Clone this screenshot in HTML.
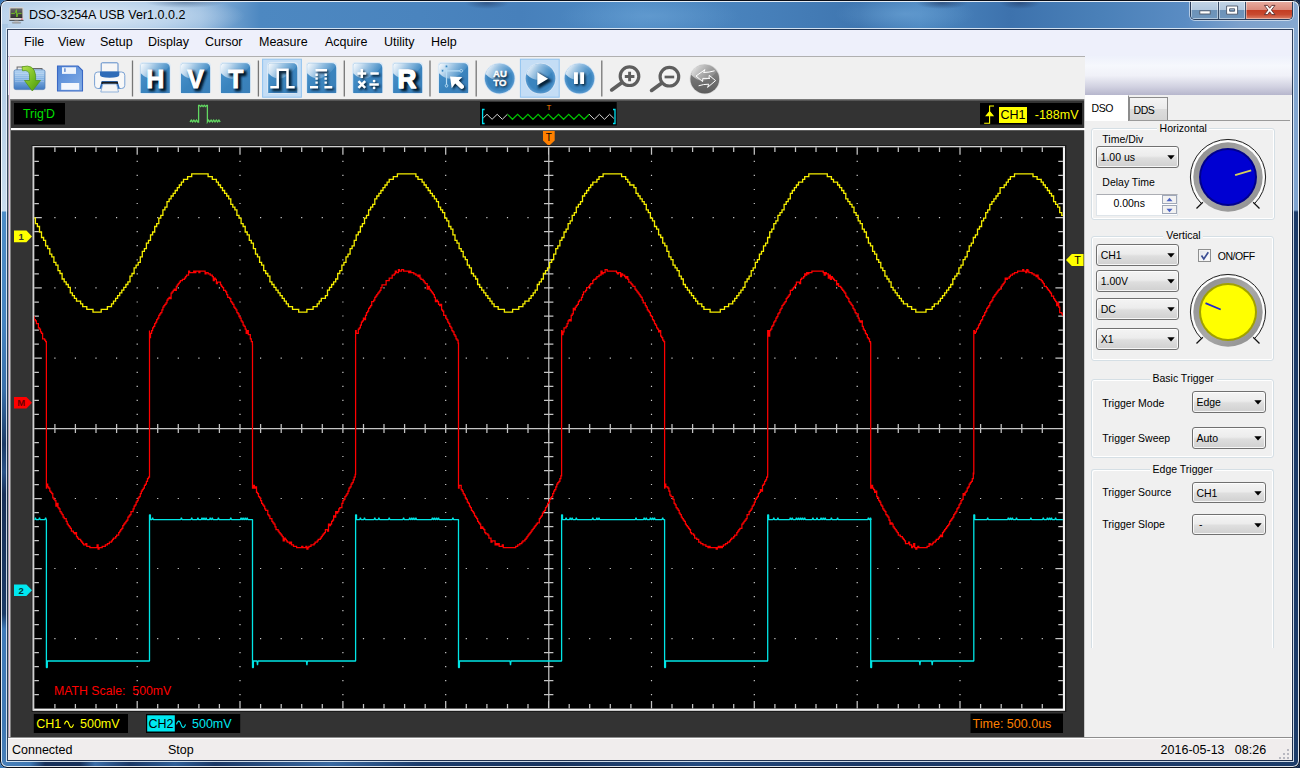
<!DOCTYPE html>
<html>
<head>
<meta charset="utf-8">
<title>DSO-3254A USB Ver1.0.0.2</title>
<style>
*{box-sizing:border-box;margin:0;padding:0}
html,body{width:1300px;height:768px;overflow:hidden;background:linear-gradient(90deg,#3d7ab8 0%,#2a5a90 50%,#14284a 100%);font-family:"Liberation Sans",sans-serif;font-size:11px;color:#000}
.abs{position:absolute}
#win{position:absolute;left:0;top:0;width:1300px;height:768px;overflow:hidden;border-radius:7px;
 background:
 radial-gradient(ellipse 40px 6px at 185px 2px,rgba(40,70,110,.45),rgba(40,70,110,0) 100%),
 radial-gradient(ellipse 150px 26px at 95px 16px,rgba(225,236,247,.95) 0%,rgba(200,220,240,.75) 55%,rgba(170,200,230,0) 100%),
 radial-gradient(ellipse 22px 6px at 487px 3px,rgba(30,50,90,.5),rgba(30,50,90,0) 100%),
 radial-gradient(ellipse 26px 6px at 942px 3px,rgba(30,50,90,.55),rgba(30,50,90,0) 100%),
 radial-gradient(ellipse 20px 6px at 1020px 3px,rgba(30,50,90,.5),rgba(30,50,90,0) 100%),
 radial-gradient(ellipse 90px 20px at 650px 16px,rgba(110,165,215,.55),rgba(110,165,215,0) 100%),
 radial-gradient(ellipse 70px 18px at 905px 14px,rgba(110,165,215,.6),rgba(110,165,215,0) 100%),
 linear-gradient(90deg,#a9c7e3 0px,#8fb6dc 200px,#4d88c1 260px,#4a84be 420px,#4780bb 520px,#4f8bc4 640px,#4780ba 760px,#3f76b0 860px,#4c87c0 920px,#3d72ad 1010px,#4a80b8 1100px,#5a8cc3 1185px,#7da1cc 1240px,#86a8d0 1300px)}
#lb,#rb,#bb{position:absolute}
#lb{left:0;top:24px;width:8px;height:744px;background:linear-gradient(180deg,#a9c7e3 0px,#b4cde6 60px,#c9dcee 186px,#c9dcee 187px,#4e8dc6 188px,#4683c0 300px,#3a70aa 365px,#1b3a66 420px,#2a5288 448px,#182f58 470px,#1b3a66 590px,#3f7ab8 605px,#3f78b4 700px,#4a80b8 744px)}
#rb{left:1292px;top:24px;width:8px;height:744px;background:linear-gradient(180deg,#86a8d0 0px,#7ea3cf 186px,#1c3c6a 188px,#1c3c6a 744px)}
#bb{left:0;top:760px;width:1300px;height:8px;background:linear-gradient(90deg,#4a80b8 0px,#3f78b4 30px,#16305a 45px,#16305a 80px,#3c6ea8 95px,#1a3866 130px,#2f5f98 175px,#1a3866 215px,#3a6aa2 330px,#1b3c6c 420px,#18345f 560px,#244b80 700px,#1a3866 860px,#1c3c6a 1300px)}
#frame{position:absolute;left:0;top:0;width:1300px;height:768px;border:1px solid #0a0e18;border-radius:7px;box-shadow:inset 0 0 0 1px rgba(255,255,255,.85);pointer-events:none}
#cframe{position:absolute;left:6px;top:28px;width:1288px;height:734px;border:1px solid rgba(235,243,252,.85);box-shadow:inset 0 0 0 1px rgba(30,45,70,.85)}
#title{position:absolute;left:29px;top:7px;font-size:12.5px;line-height:16px;color:#000;white-space:nowrap;letter-spacing:0px}
#client{position:absolute;left:8px;top:30px;width:1284px;height:730px;background:#f0f0f0}
#menubar{position:absolute;left:0;top:0;width:1284px;height:26px;background:#eef0fb}
#menubar span{position:absolute;top:4px;font-size:12.5px;line-height:16px;white-space:nowrap}
#rightgrad{position:absolute;left:1077px;top:26px;width:207px;height:39px;background:linear-gradient(180deg,#eef1fb 0%,#f6f8fd 25%,#f0f1f8 50%,#d0d0e0 80%,#b6b6cc 100%)}
#toolbar{position:absolute;left:0;top:26px;width:1077px;height:44px;background:#f0f0f0}
#scope{position:absolute;left:3px;top:69px;width:1073px;height:638px;background:linear-gradient(180deg,#8a8a8a 0px,#333 2.5px,#333 100%)}
#status{position:absolute;left:0;top:707px;width:1284px;height:23px;background:#f0eded;border-top:1px solid #8e8e8e;box-shadow:inset 0 1px 0 #fff}
#status span{position:absolute;top:4px;font-size:12.5px;line-height:16px;white-space:nowrap}
#panel{position:absolute;left:1077px;top:65px;width:207px;height:642px;background:#f0f0f0;border-right:1px solid #fff}
.pt{font-size:10.5px;line-height:13px;white-space:nowrap;color:#000}
</style>
</head>
<body>
<div id="win">
 <div id="lb"></div><div id="rb"></div><div id="bb"></div><div id="cframe"></div>
 <svg class="abs" style="left:9px;top:7px" width="15" height="17" viewBox="0 0 15 17">
 <defs><linearGradient id="mg" x1="0" y1="0" x2="0" y2="1"><stop offset="0" stop-color="#6a6a6a"/><stop offset="1" stop-color="#2e2e2e"/></linearGradient></defs>
 <rect x="0.3" y="0.3" width="14.2" height="12.6" rx="0.8" fill="#d9d6d0"/>
 <rect x="1.4" y="1.4" width="12" height="9.6" fill="url(#mg)"/>
 <path d="M2.2,6.4H5.6L6.6,5.2L7.4,2.6L7.9,10L8.6,6.6L9.4,6.4H12.6" fill="none" stroke="#74c424" stroke-width="0.95"/>
 <rect x="12.2" y="11.6" width="1.4" height="1" fill="#e02050"/>
 <rect x="0.3" y="12.9" width="14.2" height="0.9" fill="#3a3a3a"/>
 <path d="M5.5,13.8H9.5L10,15.3H5Z" fill="#c8c8c8"/>
 <rect x="3.3" y="15.2" width="8.4" height="1.1" rx="0.5" fill="#b0b0b0" stroke="#666" stroke-width="0.3"/>
</svg>
<div class="abs" id="capbtns" style="left:1190px;top:1px;width:103px;height:19px;border:1px solid #2a3d5a;border-top:none;border-radius:0 0 5px 5px;overflow:hidden;box-shadow:0 0 0 1px rgba(255,255,255,.55)">
 <div class="abs" style="left:0;top:0;width:28px;height:18px;background:linear-gradient(180deg,#c3d5e6 0%,#b2c8de 48%,#6d92b8 50%,#6f96bd 100%);border-right:1px solid #3a4d68;box-shadow:inset 0 0 0 1px rgba(255,255,255,.45)"></div>
 <div class="abs" style="left:28px;top:0;width:27px;height:18px;background:linear-gradient(180deg,#c3d5e6 0%,#b2c8de 48%,#6d92b8 50%,#6f96bd 100%);border-right:1px solid #3a4d68;box-shadow:inset 0 0 0 1px rgba(255,255,255,.45)"></div>
 <div class="abs" style="left:55px;top:0;width:47px;height:18px;background:linear-gradient(180deg,#e8aea2 0%,#db8b7c 48%,#c43c22 50%,#c84a30 75%,#dc8068 100%);box-shadow:inset 0 0 0 1px rgba(255,255,255,.4)"></div>
 <svg class="abs" style="left:0;top:0" width="102" height="18" viewBox="1191 1 102 18">
  <rect x="1199.8" y="10.8" width="10.4" height="3.2" fill="#fff" stroke="#4a5568" stroke-width="0.9"/>
  <path d="M1226.6,6H1237.6V14.2H1226.6Z M1229.6,8.8H1234.6V11.2H1229.6Z" fill="#fff" fill-rule="evenodd" stroke="#4a5568" stroke-width="0.9"/>
  <path d="M1264.4,5.4H1267.6L1269.7,8.2L1271.8,5.4H1275L1271.4,10L1275,14.6H1271.8L1269.7,11.8L1267.600,14.6H1264.4L1268,10Z" fill="#fff" stroke="#5a3030" stroke-width="0.9"/>
 </svg>
</div>

 <div id="title">DSO-3254A USB Ver1.0.0.2</div>
 <div id="client">
  <div id="menubar">
   <span style="left:16px">File</span><span style="left:50px">View</span><span style="left:92px">Setup</span><span style="left:140px">Display</span><span style="left:197px">Cursor</span><span style="left:251px">Measure</span><span style="left:317px">Acquire</span><span style="left:376px">Utility</span><span style="left:423px">Help</span>
  </div>
  <div id="rightgrad"></div>
  <div id="toolbar"><svg class="abs" style="left:0;top:0" width="1077" height="45" viewBox="8 56 1077 45" font-family="'Liberation Sans',sans-serif">
<defs>
 <linearGradient id="bbg" x1="0" y1="0" x2="1" y2="1"><stop offset="0" stop-color="#4f97cf"/><stop offset=".5" stop-color="#3a84be"/><stop offset="1" stop-color="#3a7fb8"/></linearGradient>
 <linearGradient id="bhl" x1="0" y1="0" x2="1" y2=".35"><stop offset="0" stop-color="#fff" stop-opacity=".98"/><stop offset=".3" stop-color="#e4eff9" stop-opacity=".8"/><stop offset=".7" stop-color="#a9cdea" stop-opacity=".5"/><stop offset="1" stop-color="#6aa8d8" stop-opacity=".25"/></linearGradient>
 <radialGradient id="cbg" cx=".5" cy=".5" r=".5"><stop offset="0" stop-color="#3a84be"/><stop offset=".8" stop-color="#3a84be"/><stop offset="1" stop-color="#5a9ad0"/></radialGradient>
 <linearGradient id="gbg" x1="0" y1="0" x2="0" y2="1"><stop offset="0" stop-color="#8c8c8c"/><stop offset="1" stop-color="#5c5c5c"/></linearGradient>
 <linearGradient id="ghl" x1="0" y1="0" x2="1" y2=".35"><stop offset="0" stop-color="#fff" stop-opacity=".9"/><stop offset="1" stop-color="#bbb" stop-opacity=".25"/></linearGradient>
 <filter id="sh" x="-30%" y="-30%" width="160%" height="160%"><feGaussianBlur stdDeviation="1.3"/></filter>
 <filter id="shd" x="-30%" y="-30%" width="170%" height="170%"><feGaussianBlur in="SourceAlpha" stdDeviation="1.2" result="b"/><feFlood flood-color="#04182c" flood-opacity=".95"/><feComposite in2="b" operator="in"/></filter>
 <filter id="halo" x="-20%" y="-20%" width="140%" height="140%"><feGaussianBlur stdDeviation="0.7"/></filter>
 <g id="sq">
  <rect x="-0.500" y="-0.700" width="31.200" height="32" rx="4" fill="#dbe9f6" filter="url(#halo)"/>
  <path d="M0.700,3.200Q0.700,0.500 3.400,0.500H25Q29.800,0.500 29.800,5.300V30.300H0.700Z" fill="url(#bbg)"/>
  <path d="M0.700,3.200Q0.700,0.500 3.400,0.500H25Q28.700,0.500 29.600,3.300Q14,24 0.700,10.500Z" fill="url(#bhl)"/>
 </g>
 <g id="ci">
  <circle cx="0" cy="0" r="15.800" fill="#d6e6f5" filter="url(#halo)"/>
  <circle cx="0" cy="0" r="14.900" fill="url(#cbg)"/>
  <path d="M-14.200,-4.500A14.900,14.900 0 0 1 12.600,-7.900Q-1,9 -14.200,-4.500Z" fill="url(#bhl)"/>
 </g>
 <linearGradient id="fold" x1="0" y1="0" x2="0" y2="1"><stop offset="0" stop-color="#b7d6f3"/><stop offset=".5" stop-color="#7fb0e2"/><stop offset="1" stop-color="#3f78c0"/></linearGradient>
 <linearGradient id="garr" x1="0" y1="0" x2="1" y2="1"><stop offset="0" stop-color="#b4e04a"/><stop offset=".6" stop-color="#6fb81e"/><stop offset="1" stop-color="#4c9010"/></linearGradient>
 <linearGradient id="flp" x1="0" y1="0" x2="1" y2="1"><stop offset="0" stop-color="#4f85d6"/><stop offset="1" stop-color="#84aee6"/></linearGradient>
</defs>
<rect x="8" y="55.600" width="1077" height="1.200" fill="#a0a0a0"/>
<!-- open folder -->
<g>
 <path d="M16.600,66.500H25.500L27,68H42.500V72H16.600Z" fill="#6a6a6a"/>
 <path d="M17.600,67.500H25L26.500,69H41.500V72H17.600Z" fill="#e8e8e8"/>
 <rect x="14" y="69.800" width="31" height="19.800" rx="1.800" fill="url(#fold)" stroke="#4a78b0" stroke-width=".7"/>
 <path d="M15,73.500H44M15,75.500H44M15,77.500H44M15,79.500H44M15,81.500H44" stroke="#fff" stroke-opacity=".35" stroke-width=".6"/>
 <path d="M22,66.800Q34,63.500 35.600,75V80.500H40.500L32.300,91L24.500,80.500H29.500V75Q29,69.500 22.500,70.800Z" fill="url(#garr)" stroke="#4f8f14" stroke-width=".7"/>
</g>
<!-- floppy -->
<g>
 <path d="M57.500,66H78L82.500,70.500V91H57.500Z" fill="url(#flp)" stroke="#3a68c4" stroke-width="1.100"/>
 <rect x="62" y="67.300" width="14" height="6.600" fill="#eef4fc"/>
 <rect x="64.200" y="68.300" width="1.400" height="3.600" fill="#5a86d0"/>
 <rect x="61.200" y="83" width="18" height="6.800" fill="#f4f7fd"/>
</g>
<!-- printer -->
<g>
 <rect x="101.200" y="62.800" width="16.800" height="11" rx="1" fill="#f6f6f6" stroke="#5a8ac8" stroke-width="1"/>
 <rect x="94.600" y="72" width="30.200" height="16.500" rx="3.200" fill="#f8f8f8" stroke="#7aa2d4" stroke-width="1"/>
 <path d="M100,71.500H119.300V75Q119.300,77.800 109.600,77.800Q100,77.800 100,75Z" fill="#2f6cb8"/>
 <path d="M100.500,88.500L102.500,82H116.800L118.800,88.500" fill="none" stroke="#2f6cb8" stroke-width="2"/>
 <rect x="101.500" y="81.800" width="16.400" height="2.200" fill="#1a1a1a"/>
 <path d="M102.800,84H116.600L118.500,92H100.800Z" fill="#f4f4f4" stroke="#7aa2d4" stroke-width=".8"/>
</g>
<!-- separators -->
<path d="M132.500,60.400V96.400M258.400,60.400V96.400M344.300,60.400V96.400M430,60.400V96.400M476.200,60.400V96.400M601.800,60.400V96.400" stroke="#767676" stroke-width="1.300"/>
<!-- highlights -->
<rect x="262.600" y="59.200" width="38.800" height="38" fill="#c4ddf5" stroke="#92c4f0" stroke-width="1"/>
<rect x="520.400" y="59.200" width="38.800" height="38" fill="#c4ddf5" stroke="#92c4f0" stroke-width="1"/>
<!-- H V T -->
<use href="#sq" x="140" y="62.800"/><use href="#sq" x="180.300" y="62.800"/><use href="#sq" x="220.300" y="62.800"/>
<g font-weight="bold" font-size="25" text-anchor="middle">
 <g fill="#04182c" stroke="#04182c" stroke-width="2.6" stroke-linejoin="round"><text x="157.600" y="89.900" filter="url(#sh)">H</text><text x="197.800" y="89.900" filter="url(#sh)">V</text><text x="237.900" y="89.900" filter="url(#sh)">T</text></g>
 <g fill="#fff" stroke="#fff" stroke-width=".9"><text x="155.400" y="87.500">H</text><text x="195.600" y="87.500">V</text><text x="235.700" y="87.500">T</text></g>
</g>
<!-- pulse -->
<use href="#sq" x="267.500" y="62.800"/>
<path d="M272.300,89.300H279.700V71.800H289.500V89.300H296.700" fill="none" stroke="#04182c" stroke-width="4" filter="url(#sh)" opacity=".9"/>
<path d="M270.300,87.300H277.700V69.800H287.500V87.300H294.700" fill="none" stroke="#fff" stroke-width="2.500"/>
<!-- dotted pulse -->
<use href="#sq" x="306.400" y="62.800"/>
<use href="#gdp" x="1.500" y="1.700" filter="url(#shd)"/>
<g id="gdp"><path d="M315.500,70.300H327M310,87.300H318M324.400,87.300H332.300" stroke="#fff" stroke-width="2.400" fill="none"/>
<path d="M316.600,73.600v2.300M316.600,77.500v2.300M316.600,81.400v2.300M325.700,73.600v2.300M325.700,77.500v2.300M325.700,81.400v2.300" stroke="#fff" stroke-width="2.400" fill="none"/></g>
<!-- math -->
<use href="#sq" x="352.500" y="62.800"/>
<use href="#gma" x="1.500" y="1.700" filter="url(#shd)"/>
<g id="gma"><path d="M357.400,73.500h8.800M361.800,69.100v8.800M370.400,73.500h8.400M358.400,81.100l6.800,6.800M365.200,81.100l-6.800,6.800M369.400,84.500h9.400" stroke="#fff" stroke-width="2.500" fill="none"/>
<circle cx="374.100" cy="81.100" r="1.400" fill="#fff"/><circle cx="374.100" cy="87.900" r="1.400" fill="#fff"/></g>
<!-- R -->
<use href="#sq" x="392.400" y="62.800"/>
<text x="409.800" y="90.400" font-weight="bold" font-size="26" text-anchor="middle" fill="#04182c" stroke="#04182c" stroke-width="2.6" stroke-linejoin="round" filter="url(#sh)">R</text><text x="407" y="87.600" font-weight="bold" font-size="26" text-anchor="middle" fill="#fff" stroke="#fff" stroke-width="1.500" stroke-linejoin="round">R</text>
<!-- cursor -->
<use href="#sq" x="438.300" y="62.800"/>
<path d="M446.500,66.800V85.500M443,70.800H460.800" stroke="#b8dcf4" stroke-width="1.200" fill="none"/>
<g fill="#3a84be" stroke="#b8dcf4" stroke-width=".9"><circle cx="446.500" cy="66.400" r="1.300"/><circle cx="446.500" cy="85.800" r="1.300"/><circle cx="442.600" cy="70.800" r="1.300"/><circle cx="461.200" cy="70.800" r="1.300"/></g>
<use href="#gca" x="1.400" y="1.600" filter="url(#shd)"/>
<g id="gca"><path d="M450,76.500L462.300,77L458.800,80.400L463.800,85.400Q464.800,87.200 463.200,88.600Q461.600,89.700 460.200,88.300L455.200,83.600L451.700,88.200Z" fill="#fff"/></g>
<!-- AUTO -->
<use href="#ci" x="499.700" y="78.600"/>
<use href="#gau" x="1.100" y="1.300" filter="url(#shd)"/>
<g id="gau" font-weight="bold" font-size="9.600" text-anchor="middle" fill="#fff" stroke="#fff" stroke-width=".35"><text x="499.900" y="77.300">AU</text><text x="499.900" y="86">TO</text></g>
<!-- play -->
<use href="#ci" x="540.500" y="78.600"/>
<path d="M539.300,74.200V87.300L550.100,80.800Z" fill="#04182c" stroke="#04182c" stroke-width="2" filter="url(#sh)" opacity=".9"/>
<path d="M537.300,72.200V85.300L548.100,78.800Z" fill="#fff"/>
<!-- pause -->
<use href="#ci" x="579.500" y="78.600"/>
<use href="#gpa" x="1.300" y="1.500" filter="url(#shd)"/>
<g id="gpa"><path d="M574,72.200h3.900v11.800h-3.900zM580.200,72.200h3.900v11.800h-3.900z" fill="#fff"/></g>
<!-- zoom in/out -->
<g fill="none" stroke="#5e5e5e">
 <circle cx="629.500" cy="76.200" r="9.300" stroke-width="3.200" fill="#f4f4f4"/>
 <path d="M621.300,83.100L611.700,89.900" stroke-width="3.700" stroke-linecap="round"/>
 <path d="M624.800,76.500h9.600M629.600,71.700v9.600" stroke-width="2.900"/>
 <circle cx="669.400" cy="76.700" r="9.300" stroke-width="3.200" fill="#f4f4f4"/>
 <path d="M661.200,83.600L651.600,90.400" stroke-width="3.700" stroke-linecap="round"/>
 <path d="M664.600,77h9.600" stroke-width="2.700"/>
</g>
<!-- swap -->
<circle cx="704.800" cy="79.100" r="15.200" fill="#d8d8d8" filter="url(#halo)"/>
<circle cx="704.800" cy="79.100" r="14.400" fill="url(#gbg)"/>
<path d="M691.100,74.700A14.400,14.400 0 0 1 717,71.500Q703.800,88 691.100,74.700Z" fill="url(#ghl)"/>
<path d="M714.600,70.800Q709,72.500 703.600,72.500L705,69.600L696,76L702.600,81.600L702.800,78.400H710" fill="none" stroke="#fff" stroke-width="1"/>
<path d="M698.600,85.800Q703,84.200 708.800,84.200L707.600,87.400L715.600,80.600L709.200,75.300L709,78.400" fill="none" stroke="#fff" stroke-width="1"/>
</svg>
</div>
  <div class="abs" style="left:0;top:65px;width:1px;height:642px;background:#a2a2a2"></div><div class="abs" style="left:1px;top:26px;width:1px;height:681px;background:#e8cde8"></div><div class="abs" style="left:2px;top:69px;width:2px;height:638px;background:linear-gradient(90deg,#9a9a9a,#3a3a3a)"></div><div class="abs" style="left:1076px;top:69px;width:1px;height:638px;background:#c8c8c8"></div>
  <div id="scope"><svg width="1074" height="637" viewBox="11 100 1074 637" style="position:absolute;left:0;top:1px" font-family="'Liberation Sans',sans-serif">
<defs><linearGradient id="tsh" x1="0" y1="0" x2="0" y2="1"><stop offset="0" stop-color="#9a9a9a"/><stop offset="1" stop-color="#333"/></linearGradient></defs>
<rect x="14" y="103" width="51" height="21.5" fill="#000"/>
<text x="39" y="118.3" font-size="12.300" fill="#00e000" text-anchor="middle">Trig'D</text>
<polyline fill="none" stroke="#62d862" stroke-width="1.3" points="190,122 191.3,120.2 192.6,122 193.9,120.2 195.2,122 196.5,120.2 197.8,122 198.6,122 198.6,105.3 199.5,105.3 200.7,106.6 201.9,105.3 203.1,106.6 204.3,105.3 205.5,106.6 206.7,105.3 207.4,105.3 207.4,122 208.5,120.2 209.8,122 211.1,120.2 212.4,122 213.7,120.2 215,122 216.3,120.2 217.6,122 218.9,120.2 220.2,122"/>
<rect x="480" y="102" width="136.7" height="23.5" fill="#000"/>
<polyline fill="none" stroke="#d8d8d8" stroke-width="1" points="483.3,117.9 487,114.3 492.1,119.3 497.2,114.3 502.3,119.3 507.4,114.3 507.5,114.4"/>
<polyline fill="none" stroke="#00c000" stroke-width="1.2" points="507.5,114.4 512.5,119.3 517.6,114.3 522.8,119.3 527.9,114.3 533,119.3 538.1,114.3 543.2,119.3 548.3,114.3 553.4,119.3 558.5,114.3 563.6,119.3 568.7,114.3 573.9,119.3 579,114.3 584.1,119.3 589.2,114.3 589.2,114.3"/>
<polyline fill="none" stroke="#d8d8d8" stroke-width="1" points="589.2,114.3 594.3,119.3 599.4,114.3 604.5,119.3 609.6,114.3 613.8,118.4"/>
<path d="M484.6,109.5H482.6V123.5H484.6M613,109.5H615V123.5H613" fill="none" stroke="#00e0f0" stroke-width="1.3"/>
<text x="548.8" y="109.700" font-size="7.800" fill="#ff8000" text-anchor="middle">T</text>
<rect x="980" y="103" width="102" height="21.5" fill="#000"/>
<path d="M984.2,123.2H989.6V106H994M986.2,115.8L989.6,111.6L993,115.8Z" fill="none" stroke="#ffff00" stroke-width="1.1"/>
<path d="M986.2,115.8L989.6,111.6L993,115.8Z" fill="#ffff00"/>
<rect x="999" y="107" width="28" height="16" fill="#ffff00"/>
<text x="1013" y="119" font-size="12.5" fill="#000" text-anchor="middle">CH1</text>
<text x="1078.5" y="119" font-size="12.5" fill="#ffff00" text-anchor="end">-188mV</text>
<rect x="11" y="128" width="1074" height="2.2" fill="#fff"/>
<path d="M543,131H554.7V140.5L548.85,146L543,140.5Z" fill="#ff8000"/>
<text x="548.85" y="140.6" font-size="10" fill="#000" text-anchor="middle">T</text>
<rect x="31.7" y="145" width="1034.6" height="767" fill="#1a1a1a" style="height:567px"/>
<rect x="32.7" y="146" width="1032.3" height="564.8" fill="#f2f2f2"/>
<path d="M32.7,146H1065V148.1H34.3V710.8H32.7Z" fill="#cfcfcf"/>
<rect x="34.3" y="147.3" width="1028.6" height="561.3" fill="#000"/>
<path d="M54.3,217.6h1.2M74.8,217.6h1.2M95.4,217.6h1.2M116,217.6h1.2M136.6,217.6h1.2M157.1,217.6h1.2M177.7,217.6h1.2M198.3,217.6h1.2M218.8,217.6h1.2M239.4,217.6h1.2M260,217.6h1.2M280.6,217.6h1.2M301.1,217.6h1.2M321.7,217.6h1.2M342.3,217.6h1.2M362.9,217.6h1.2M383.4,217.6h1.2M404,217.6h1.2M424.6,217.6h1.2M445.1,217.6h1.2M465.7,217.6h1.2M486.3,217.6h1.2M506.9,217.6h1.2M527.4,217.6h1.2M548,217.6h1.2M568.6,217.6h1.2M589.1,217.6h1.2M609.7,217.6h1.2M630.3,217.6h1.2M650.9,217.6h1.2M671.4,217.6h1.2M692,217.6h1.2M712.6,217.6h1.2M733.1,217.6h1.2M753.7,217.6h1.2M774.3,217.6h1.2M794.9,217.6h1.2M815.4,217.6h1.2M836,217.6h1.2M856.6,217.6h1.2M877.2,217.6h1.2M897.7,217.6h1.2M918.3,217.6h1.2M938.9,217.6h1.2M959.4,217.6h1.2M980,217.6h1.2M1000.6,217.6h1.2M1021.2,217.6h1.2M1041.7,217.6h1.2M54.3,287.9h1.2M74.8,287.9h1.2M95.4,287.9h1.2M116,287.9h1.2M136.6,287.9h1.2M157.1,287.9h1.2M177.7,287.9h1.2M198.3,287.9h1.2M218.8,287.9h1.2M239.4,287.9h1.2M260,287.9h1.2M280.6,287.9h1.2M301.1,287.9h1.2M321.7,287.9h1.2M342.3,287.9h1.2M362.9,287.9h1.2M383.4,287.9h1.2M404,287.9h1.2M424.6,287.9h1.2M445.1,287.9h1.2M465.7,287.9h1.2M486.3,287.9h1.2M506.9,287.9h1.2M527.4,287.9h1.2M548,287.9h1.2M568.6,287.9h1.2M589.1,287.9h1.2M609.7,287.9h1.2M630.3,287.9h1.2M650.9,287.9h1.2M671.4,287.9h1.2M692,287.9h1.2M712.6,287.9h1.2M733.1,287.9h1.2M753.7,287.9h1.2M774.3,287.9h1.2M794.9,287.9h1.2M815.4,287.9h1.2M836,287.9h1.2M856.6,287.9h1.2M877.2,287.9h1.2M897.7,287.9h1.2M918.3,287.9h1.2M938.9,287.9h1.2M959.4,287.9h1.2M980,287.9h1.2M1000.6,287.9h1.2M1021.2,287.9h1.2M1041.7,287.9h1.2M54.3,358.2h1.2M74.8,358.2h1.2M95.4,358.2h1.2M116,358.2h1.2M136.6,358.2h1.2M157.1,358.2h1.2M177.7,358.2h1.2M198.3,358.2h1.2M218.8,358.2h1.2M239.4,358.2h1.2M260,358.2h1.2M280.6,358.2h1.2M301.1,358.2h1.2M321.7,358.2h1.2M342.3,358.2h1.2M362.9,358.2h1.2M383.4,358.2h1.2M404,358.2h1.2M424.6,358.2h1.2M445.1,358.2h1.2M465.7,358.2h1.2M486.3,358.2h1.2M506.9,358.2h1.2M527.4,358.2h1.2M548,358.2h1.2M568.6,358.2h1.2M589.1,358.2h1.2M609.7,358.2h1.2M630.3,358.2h1.2M650.9,358.2h1.2M671.4,358.2h1.2M692,358.2h1.2M712.6,358.2h1.2M733.1,358.2h1.2M753.7,358.2h1.2M774.3,358.2h1.2M794.9,358.2h1.2M815.4,358.2h1.2M836,358.2h1.2M856.6,358.2h1.2M877.2,358.2h1.2M897.7,358.2h1.2M918.3,358.2h1.2M938.9,358.2h1.2M959.4,358.2h1.2M980,358.2h1.2M1000.6,358.2h1.2M1021.2,358.2h1.2M1041.7,358.2h1.2M54.3,498.5h1.2M74.8,498.5h1.2M95.4,498.5h1.2M116,498.5h1.2M136.6,498.5h1.2M157.1,498.5h1.2M177.7,498.5h1.2M198.3,498.5h1.2M218.8,498.5h1.2M239.4,498.5h1.2M260,498.5h1.2M280.6,498.5h1.2M301.1,498.5h1.2M321.7,498.5h1.2M342.3,498.5h1.2M362.9,498.5h1.2M383.4,498.5h1.2M404,498.5h1.2M424.6,498.5h1.2M445.1,498.5h1.2M465.7,498.5h1.2M486.3,498.5h1.2M506.9,498.5h1.2M527.4,498.5h1.2M548,498.5h1.2M568.6,498.5h1.2M589.1,498.5h1.2M609.7,498.5h1.2M630.3,498.5h1.2M650.9,498.5h1.2M671.4,498.5h1.2M692,498.5h1.2M712.6,498.5h1.2M733.1,498.5h1.2M753.7,498.5h1.2M774.3,498.5h1.2M794.9,498.5h1.2M815.4,498.5h1.2M836,498.5h1.2M856.6,498.5h1.2M877.2,498.5h1.2M897.7,498.5h1.2M918.3,498.5h1.2M938.9,498.5h1.2M959.4,498.5h1.2M980,498.5h1.2M1000.6,498.5h1.2M1021.2,498.5h1.2M1041.7,498.5h1.2M54.3,568.5h1.2M74.8,568.5h1.2M95.4,568.5h1.2M116,568.5h1.2M136.6,568.5h1.2M157.1,568.5h1.2M177.7,568.5h1.2M198.3,568.5h1.2M218.8,568.5h1.2M239.4,568.5h1.2M260,568.5h1.2M280.6,568.5h1.2M301.1,568.5h1.2M321.7,568.5h1.2M342.3,568.5h1.2M362.9,568.5h1.2M383.4,568.5h1.2M404,568.5h1.2M424.6,568.5h1.2M445.1,568.5h1.2M465.7,568.5h1.2M486.3,568.5h1.2M506.9,568.5h1.2M527.4,568.5h1.2M548,568.5h1.2M568.6,568.5h1.2M589.1,568.5h1.2M609.7,568.5h1.2M630.3,568.5h1.2M650.9,568.5h1.2M671.4,568.5h1.2M692,568.5h1.2M712.6,568.5h1.2M733.1,568.5h1.2M753.7,568.5h1.2M774.3,568.5h1.2M794.9,568.5h1.2M815.4,568.5h1.2M836,568.5h1.2M856.6,568.5h1.2M877.2,568.5h1.2M897.7,568.5h1.2M918.3,568.5h1.2M938.9,568.5h1.2M959.4,568.5h1.2M980,568.5h1.2M1000.6,568.5h1.2M1021.2,568.5h1.2M1041.7,568.5h1.2M54.3,638.6h1.2M74.8,638.6h1.2M95.4,638.6h1.2M116,638.6h1.2M136.6,638.6h1.2M157.1,638.6h1.2M177.7,638.6h1.2M198.3,638.6h1.2M218.8,638.6h1.2M239.4,638.6h1.2M260,638.6h1.2M280.6,638.6h1.2M301.1,638.6h1.2M321.7,638.6h1.2M342.3,638.6h1.2M362.9,638.6h1.2M383.4,638.6h1.2M404,638.6h1.2M424.6,638.6h1.2M445.1,638.6h1.2M465.7,638.6h1.2M486.3,638.6h1.2M506.9,638.6h1.2M527.4,638.6h1.2M548,638.6h1.2M568.6,638.6h1.2M589.1,638.6h1.2M609.7,638.6h1.2M630.3,638.6h1.2M650.9,638.6h1.2M671.4,638.6h1.2M692,638.6h1.2M712.6,638.6h1.2M733.1,638.6h1.2M753.7,638.6h1.2M774.3,638.6h1.2M794.9,638.6h1.2M815.4,638.6h1.2M836,638.6h1.2M856.6,638.6h1.2M877.2,638.6h1.2M897.7,638.6h1.2M918.3,638.6h1.2M938.9,638.6h1.2M959.4,638.6h1.2M980,638.6h1.2M1000.6,638.6h1.2M1021.2,638.6h1.2M1041.7,638.6h1.2M136.6,161.4h1.2M136.6,175.4h1.2M136.6,189.5h1.2M136.6,203.5h1.2M136.6,231.7h1.2M136.6,245.7h1.2M136.6,259.8h1.2M136.6,273.8h1.2M136.6,302h1.2M136.6,316h1.2M136.6,330.1h1.2M136.6,344.1h1.2M136.6,372.3h1.2M136.6,386.3h1.2M136.6,400.4h1.2M136.6,414.4h1.2M136.6,442.5h1.2M136.6,456.5h1.2M136.6,470.5h1.2M136.6,484.5h1.2M136.6,512.5h1.2M136.6,526.5h1.2M136.6,540.5h1.2M136.6,554.5h1.2M136.6,582.6h1.2M136.6,596.6h1.2M136.6,610.6h1.2M136.6,624.6h1.2M136.6,652.6h1.2M136.6,666.6h1.2M136.6,680.6h1.2M136.6,694.6h1.2M239.4,161.4h1.2M239.4,175.4h1.2M239.4,189.5h1.2M239.4,203.5h1.2M239.4,231.7h1.2M239.4,245.7h1.2M239.4,259.8h1.2M239.4,273.8h1.2M239.4,302h1.2M239.4,316h1.2M239.4,330.1h1.2M239.4,344.1h1.2M239.4,372.3h1.2M239.4,386.3h1.2M239.4,400.4h1.2M239.4,414.4h1.2M239.4,442.5h1.2M239.4,456.5h1.2M239.4,470.5h1.2M239.4,484.5h1.2M239.4,512.5h1.2M239.4,526.5h1.2M239.4,540.5h1.2M239.4,554.5h1.2M239.4,582.6h1.2M239.4,596.6h1.2M239.4,610.6h1.2M239.4,624.6h1.2M239.4,652.6h1.2M239.4,666.6h1.2M239.4,680.6h1.2M239.4,694.6h1.2M342.3,161.4h1.2M342.3,175.4h1.2M342.3,189.5h1.2M342.3,203.5h1.2M342.3,231.7h1.2M342.3,245.7h1.2M342.3,259.8h1.2M342.3,273.8h1.2M342.3,302h1.2M342.3,316h1.2M342.3,330.1h1.2M342.3,344.1h1.2M342.3,372.3h1.2M342.3,386.3h1.2M342.3,400.4h1.2M342.3,414.4h1.2M342.3,442.5h1.2M342.3,456.5h1.2M342.3,470.5h1.2M342.3,484.5h1.2M342.3,512.5h1.2M342.3,526.5h1.2M342.3,540.5h1.2M342.3,554.5h1.2M342.3,582.6h1.2M342.3,596.6h1.2M342.3,610.6h1.2M342.3,624.6h1.2M342.3,652.6h1.2M342.3,666.6h1.2M342.3,680.6h1.2M342.3,694.6h1.2M445.1,161.4h1.2M445.1,175.4h1.2M445.1,189.5h1.2M445.1,203.5h1.2M445.1,231.7h1.2M445.1,245.7h1.2M445.1,259.8h1.2M445.1,273.8h1.2M445.1,302h1.2M445.1,316h1.2M445.1,330.1h1.2M445.1,344.1h1.2M445.1,372.3h1.2M445.1,386.3h1.2M445.1,400.4h1.2M445.1,414.4h1.2M445.1,442.5h1.2M445.1,456.5h1.2M445.1,470.5h1.2M445.1,484.5h1.2M445.1,512.5h1.2M445.1,526.5h1.2M445.1,540.5h1.2M445.1,554.5h1.2M445.1,582.6h1.2M445.1,596.6h1.2M445.1,610.6h1.2M445.1,624.6h1.2M445.1,652.6h1.2M445.1,666.6h1.2M445.1,680.6h1.2M445.1,694.6h1.2M650.9,161.4h1.2M650.9,175.4h1.2M650.9,189.5h1.2M650.9,203.5h1.2M650.9,231.7h1.2M650.9,245.7h1.2M650.9,259.8h1.2M650.9,273.8h1.2M650.9,302h1.2M650.9,316h1.2M650.9,330.1h1.2M650.9,344.1h1.2M650.9,372.3h1.2M650.9,386.3h1.2M650.9,400.4h1.2M650.9,414.4h1.2M650.9,442.5h1.2M650.9,456.5h1.2M650.9,470.5h1.2M650.9,484.5h1.2M650.9,512.5h1.2M650.9,526.5h1.2M650.9,540.5h1.2M650.9,554.5h1.2M650.9,582.6h1.2M650.9,596.6h1.2M650.9,610.6h1.2M650.9,624.6h1.2M650.9,652.6h1.2M650.9,666.6h1.2M650.9,680.6h1.2M650.9,694.6h1.2M753.7,161.4h1.2M753.7,175.4h1.2M753.7,189.5h1.2M753.7,203.5h1.2M753.7,231.7h1.2M753.7,245.7h1.2M753.7,259.8h1.2M753.7,273.8h1.2M753.7,302h1.2M753.7,316h1.2M753.7,330.1h1.2M753.7,344.1h1.2M753.7,372.3h1.2M753.7,386.3h1.2M753.7,400.4h1.2M753.7,414.4h1.2M753.7,442.5h1.2M753.7,456.5h1.2M753.7,470.5h1.2M753.7,484.5h1.2M753.7,512.5h1.2M753.7,526.5h1.2M753.7,540.5h1.2M753.7,554.5h1.2M753.7,582.6h1.2M753.7,596.6h1.2M753.7,610.6h1.2M753.7,624.6h1.2M753.7,652.6h1.2M753.7,666.6h1.2M753.7,680.6h1.2M753.7,694.6h1.2M856.6,161.4h1.2M856.6,175.4h1.2M856.6,189.5h1.2M856.6,203.5h1.2M856.6,231.7h1.2M856.6,245.7h1.2M856.6,259.8h1.2M856.6,273.8h1.2M856.6,302h1.2M856.6,316h1.2M856.6,330.1h1.2M856.6,344.1h1.2M856.6,372.3h1.2M856.6,386.3h1.2M856.6,400.4h1.2M856.6,414.4h1.2M856.6,442.5h1.2M856.6,456.5h1.2M856.6,470.5h1.2M856.6,484.5h1.2M856.6,512.5h1.2M856.6,526.5h1.2M856.6,540.5h1.2M856.6,554.5h1.2M856.6,582.6h1.2M856.6,596.6h1.2M856.6,610.6h1.2M856.6,624.6h1.2M856.6,652.6h1.2M856.6,666.6h1.2M856.6,680.6h1.2M856.6,694.6h1.2M959.4,161.4h1.2M959.4,175.4h1.2M959.4,189.5h1.2M959.4,203.5h1.2M959.4,231.7h1.2M959.4,245.7h1.2M959.4,259.8h1.2M959.4,273.8h1.2M959.4,302h1.2M959.4,316h1.2M959.4,330.1h1.2M959.4,344.1h1.2M959.4,372.3h1.2M959.4,386.3h1.2M959.4,400.4h1.2M959.4,414.4h1.2M959.4,442.5h1.2M959.4,456.5h1.2M959.4,470.5h1.2M959.4,484.5h1.2M959.4,512.5h1.2M959.4,526.5h1.2M959.4,540.5h1.2M959.4,554.5h1.2M959.4,582.6h1.2M959.4,596.6h1.2M959.4,610.6h1.2M959.4,624.6h1.2M959.4,652.6h1.2M959.4,666.6h1.2M959.4,680.6h1.2M959.4,694.6h1.2" stroke="#c8c8c8" stroke-width="1.2" fill="none"/>
<path d="M54.9,147.3v4.6M54.9,708.6v-4.6M75.4,147.3v4.6M75.4,708.6v-4.6M96,147.3v4.6M96,708.6v-4.6M116.6,147.3v4.6M116.6,708.6v-4.6M137.2,147.3v7.5M137.2,708.6v-7.5M157.7,147.3v4.6M157.7,708.6v-4.6M178.3,147.3v4.6M178.3,708.6v-4.6M198.9,147.3v4.6M198.9,708.6v-4.6M219.4,147.3v4.6M219.4,708.6v-4.6M240,147.3v7.5M240,708.6v-7.5M260.6,147.3v4.6M260.6,708.6v-4.6M281.2,147.3v4.6M281.2,708.6v-4.6M301.7,147.3v4.6M301.7,708.6v-4.6M322.3,147.3v4.6M322.3,708.6v-4.6M342.9,147.3v7.5M342.9,708.6v-7.5M363.5,147.3v4.6M363.5,708.6v-4.6M384,147.3v4.6M384,708.6v-4.6M404.6,147.3v4.6M404.6,708.6v-4.6M425.2,147.3v4.6M425.2,708.6v-4.6M445.7,147.3v7.5M445.7,708.6v-7.5M466.3,147.3v4.6M466.3,708.6v-4.6M486.9,147.3v4.6M486.9,708.6v-4.6M507.5,147.3v4.6M507.5,708.6v-4.6M528,147.3v4.6M528,708.6v-4.6M548.6,147.3v7.5M548.6,708.6v-7.5M569.2,147.3v4.6M569.2,708.6v-4.6M589.7,147.3v4.6M589.7,708.6v-4.6M610.3,147.3v4.6M610.3,708.6v-4.6M630.9,147.3v4.6M630.9,708.6v-4.6M651.5,147.3v7.5M651.5,708.6v-7.5M672,147.3v4.6M672,708.6v-4.6M692.6,147.3v4.6M692.6,708.6v-4.6M713.2,147.3v4.6M713.2,708.6v-4.6M733.7,147.3v4.6M733.7,708.6v-4.6M754.3,147.3v7.5M754.3,708.6v-7.5M774.9,147.3v4.6M774.9,708.6v-4.6M795.5,147.3v4.6M795.5,708.6v-4.6M816,147.3v4.6M816,708.6v-4.6M836.6,147.3v4.6M836.6,708.6v-4.6M857.2,147.3v7.5M857.2,708.6v-7.5M877.8,147.3v4.6M877.8,708.6v-4.6M898.3,147.3v4.6M898.3,708.6v-4.6M918.9,147.3v4.6M918.9,708.6v-4.6M939.5,147.3v4.6M939.5,708.6v-4.6M960,147.3v7.5M960,708.6v-7.5M980.6,147.3v4.6M980.6,708.6v-4.6M1001.2,147.3v4.6M1001.2,708.6v-4.6M1021.8,147.3v4.6M1021.8,708.6v-4.6M1042.3,147.3v4.6M1042.3,708.6v-4.6M34.3,161.4h4.6M1062.9,161.4h-4.6M34.3,175.4h4.6M1062.9,175.4h-4.6M34.3,189.5h4.6M1062.9,189.5h-4.6M34.3,203.5h4.6M1062.9,203.5h-4.6M34.3,217.6h7.5M1062.9,217.6h-7.5M34.3,231.7h4.6M1062.9,231.7h-4.6M34.3,245.7h4.6M1062.9,245.7h-4.6M34.3,259.8h4.6M1062.9,259.8h-4.6M34.3,273.8h4.6M1062.9,273.8h-4.6M34.3,287.9h7.5M1062.9,287.9h-7.5M34.3,302h4.6M1062.9,302h-4.6M34.3,316h4.6M1062.9,316h-4.6M34.3,330.1h4.6M1062.9,330.1h-4.6M34.3,344.1h4.6M1062.9,344.1h-4.6M34.3,358.2h7.5M1062.9,358.2h-7.5M34.3,372.3h4.6M1062.9,372.3h-4.6M34.3,386.3h4.6M1062.9,386.3h-4.6M34.3,400.4h4.6M1062.9,400.4h-4.6M34.3,414.4h4.6M1062.9,414.4h-4.6M34.3,428.5h7.5M1062.9,428.5h-7.5M34.3,442.5h4.6M1062.9,442.5h-4.6M34.3,456.5h4.6M1062.9,456.5h-4.6M34.3,470.5h4.6M1062.9,470.5h-4.6M34.3,484.5h4.6M1062.9,484.5h-4.6M34.3,498.5h7.5M1062.9,498.5h-7.5M34.3,512.5h4.6M1062.9,512.5h-4.6M34.3,526.5h4.6M1062.9,526.5h-4.6M34.3,540.5h4.6M1062.9,540.5h-4.6M34.3,554.5h4.6M1062.9,554.5h-4.6M34.3,568.5h7.5M1062.9,568.5h-7.5M34.3,582.6h4.6M1062.9,582.6h-4.6M34.3,596.6h4.6M1062.9,596.6h-4.6M34.3,610.6h4.6M1062.9,610.6h-4.6M34.3,624.6h4.6M1062.9,624.6h-4.6M34.3,638.6h7.5M1062.9,638.6h-7.5M34.3,652.6h4.6M1062.9,652.6h-4.6M34.3,666.6h4.6M1062.9,666.6h-4.6M34.3,680.6h4.6M1062.9,680.6h-4.6M34.3,694.6h4.6M1062.9,694.6h-4.6M54.9,424v9M75.4,424v9M96,424v9M116.6,424v9M137.2,424v9M157.7,424v9M178.3,424v9M198.9,424v9M219.4,424v9M240,424v9M260.6,424v9M281.2,424v9M301.7,424v9M322.3,424v9M342.9,424v9M363.5,424v9M384,424v9M404.6,424v9M425.2,424v9M445.7,424v9M466.3,424v9M486.9,424v9M507.5,424v9M528,424v9M548.6,424v9M569.2,424v9M589.7,424v9M610.3,424v9M630.9,424v9M651.5,424v9M672,424v9M692.6,424v9M713.2,424v9M733.7,424v9M754.3,424v9M774.9,424v9M795.5,424v9M816,424v9M836.6,424v9M857.2,424v9M877.8,424v9M898.3,424v9M918.9,424v9M939.5,424v9M960,424v9M980.6,424v9M1001.2,424v9M1021.8,424v9M1042.3,424v9M544,161.4h9.400M544,175.4h9.400M544,189.5h9.400M544,203.5h9.400M544,217.6h9.400M544,231.7h9.400M544,245.7h9.400M544,259.8h9.400M544,273.8h9.400M544,287.9h9.400M544,302h9.400M544,316h9.400M544,330.1h9.400M544,344.1h9.400M544,358.2h9.400M544,372.3h9.400M544,386.3h9.400M544,400.4h9.400M544,414.4h9.400M544,428.5h9.400M544,442.5h9.400M544,456.5h9.400M544,470.5h9.400M544,484.5h9.400M544,498.5h9.400M544,512.5h9.400M544,526.5h9.400M544,540.5h9.400M544,554.5h9.400M544,568.5h9.400M544,582.6h9.400M544,596.6h9.400M544,610.6h9.400M544,624.6h9.400M544,638.6h9.400M544,652.6h9.400M544,666.6h9.400M544,680.6h9.400M544,694.6h9.400M34.3,428.5H1062.9M548.8,147.3V708.6" stroke="#c4c4c4" stroke-width="1.25" fill="none"/>
<clipPath id="pc"><rect x="34.3" y="147.3" width="1028.6" height="561.3"/></clipPath>
<g clip-path="url(#pc)" fill="none" stroke-width="1.3" stroke-linejoin="miter">
<path d="M33.3,316.7H34.3V319.5H35.4V320.9H36.4V323.6H38.4V327.8H39.5V329.2H40.5V331.9H41.5V333.3H42.6V338.8H43.6V338.8H44.6V340.2H45.6V341.6H46.4V344.4H46.4V488.2H46.7V484.1H47.7V486.8H48.7V488.2H49.8V491H50.8V492.3H51.8V493.7H52.8V497.9H53.9V499.3H54.9V500.6H55.9V506.2H57V503.4H58V507.6H59V508.9H60V511.7H61.1V513.1H62.1V514.5H63.1V517.2H64.2V518.6H66.2V521.4H67.2V524.2H68.3V525.5H69.3V526.9H70.3V528.3H71.4V531.1H73.4V532.5H74.4V533.8H75.5V532.5H76.5V536.6H77.5V538H78.6V539.4H80.6V540.8H81.6V542.1H82.7V543.5H83.7V544.9H85.8V543.5H86.8V546.3H89.9V547.7H97.1V544.9H98.1V549.1H99.1V547.7H102.2V546.3H105.3V544.9H107.4V543.5H109.4V542.1H111.5V540.8H112.5V539.4H113.5V538H114.6V538H115.6V536.6H116.6V535.2H118.7V532.5H119.7V531.1H120.7V529.7H121.8V528.3H122.8V525.5H123.8V524.2H124.8V522.8H125.9V521.4H126.9V520H127.9V517.2H129V515.9H130V514.5H131V511.7H133.1V508.9H134.1V506.2H135.1V504.8H136.1V502H137.2V500.6H138.2V497.9H139.2V496.5H140.3V493.7H141.3V491H142.3V489.6H143.3V488.2H144.4V485.4H145.4V484.1H146.4V481.3H147.5V478.5H148.5V477.1H149.5V474.4H149.5V330.5H149.5V337.5H150.5V333.3H151.6V330.5H152.6V327.8H153.6V326.4H154.7V323.6H155.7V322.2H156.7V319.5H157.7V318.1H158.8V315.3H159.8V313.9H160.8V312.6H161.9V309.8H162.9V307H163.9V305.6H164.9V304.3H166V302.9H167V300.1H168V298.7H169.1V297.3H170.1V298.7H171.1V293.2H172.1V291.8H173.2V290.4H174.2V289H175.2V290.4H176.3V286.3H177.3V284.9H178.3V283.5H179.3V282.1H180.4V280.7H182.4V279.4H184.5V278H185.5V276.6H186.5V275.2H188.6V271.1H189.6V272.5H193.7V271.1H194.8V272.5H195.8V271.1H198.9V272.5H199.9V271.1H205.1V273.8H206.1V272.5H208.1V273.8H210.2V275.2H212.3V276.6H213.3V280.7H214.3V278H215.3V279.4H216.4V283.5H217.4V282.1H220.5V284.9H221.5V286.3H222.5V287.7H223.6V290.4H225.6V291.8H226.7V294.6H227.7V297.3H228.7V297.3H229.7V298.7H230.8V301.5H231.8V302.9H232.8V304.3H233.9V307H234.9V308.4H235.9V309.8H236.9V312.6H238V313.9H239V316.7H240V318.1H241.1V320.9H242.1V322.2H243.1V325H244.1V326.4H245.2V329.2H246.2V333.3H247.2V330.5H248.3V334.7H250.3V338.8H251.3V341.6H252.4V344.4H252.5V488.2H253.4V485.4H254.4V488.2H255.5V486.8H256.5V492.3H257.5V493.7H258.5V496.5H259.6V497.9H260.6V500.6H261.6V503.4H262.7V504.8H263.7V506.2H264.7V508.9H265.7V510.3H266.8V510.3H267.8V514.5H268.8V515.9H269.9V518.6H271.9V521.4H272.9V522.8H274V524.2H275V526.9H276V529.7H277.1V529.7H278.1V531.1H279.1V532.5H280.1V533.8H281.2V535.2H282.2V536.6H283.2V540.8H284.3V538H285.3V539.4H286.3V540.8H287.3V542.1H289.4V543.5H290.4V542.1H291.5V544.9H293.5V546.3H296.6V547.7H301.7V546.3H302.8V547.7H305.9V546.3H306.9V549.1H307.9V547.7H308.9V546.3H311V544.9H314.1V543.5H315.1V542.1H317.2V540.8H318.2V539.4H320.3V538H321.3V536.6H322.3V535.2H323.3V533.8H324.4V532.5H325.4V529.7H327.5V531.1H328.5V524.2H329.5V525.5H330.5V524.2H331.6V521.4H332.6V520H333.6V515.9H334.7V517.2H335.7V511.7H336.7V513.1H337.7V511.7H338.8V508.9H339.8V507.6H340.8V507.6H341.9V503.4H342.9V500.6H343.9V499.3H344.9V496.5H346V495.1H347V493.7H348V491H349V488.2H350.1V486.8H351.1V484.1H352.1V482.7H353.2V479.9H354.2V477.1H355.2V474.4H355.6V330.5H356.2V333.3H358.3V329.2H359.3V327.8H360.4V325H361.4V322.2H362.4V320.9H363.4V318.1H364.5V319.5H365.5V315.3H366.5V312.6H367.6V311.2H368.6V308.4H369.6V307H370.6V305.6H371.7V301.5H373.7V300.1H374.8V297.3H375.8V296H376.8V294.6H377.8V293.2H378.9V291.8H379.9V290.4H380.9V287.7H382V284.9H385V284.9H386.1V280.7H388.1V280.7H389.2V278H392.2V275.2H394.3V273.8H395.3V271.1H396.4V272.5H398.4V269.7H399.4V271.1H401.5V269.7H403.6V271.1H408.7V272.5H409.7V271.1H410.8V272.5H413.8V273.8H415.9V275.2H418V276.6H419V275.2H420V278H421V279.4H423.1V280.7H424.1V282.1H425.2V283.5H426.2V283.5H427.2V289H428.2V286.3H429.3V289H430.3V290.4H431.3V291.8H432.4V293.2H433.4V294.6H434.4V297.3H435.4V301.5H436.5V300.1H437.5V301.5H438.5V304.3H439.6V305.6H440.6V304.3H441.6V309.8H442.6V311.2H443.7V315.3H444.7V315.3H445.7V318.1H446.8V319.5H447.8V322.2H448.8V323.6H449.8V326.4H450.9V327.8H451.9V330.5H452.9V331.9H454V334.7H455V336.1H456V338.8H457V340.2H458.1V343H458.5V344.4H458.5V488.2H459.1V485.4H460.1V485.4H461.2V489.6H462.2V491H463.2V493.7H464.2V495.1H465.3V497.9H466.3V499.3H467.3V502H468.4V503.4H469.4V506.2H470.4V507.6H471.4V510.3H472.5V511.7H473.5V513.1H474.5V515.9H475.6V517.2H476.6V518.6H477.6V521.4H478.6V522.8H479.7V524.2H480.7V528.3H481.7V526.9H482.8V528.3H483.8V529.7H484.8V532.5H485.8V533.8H487.9V535.2H488.9V538H490V538H491V542.1H492V540.8H494.1V540.8H495.1V544.9H496.1V543.5H497.2V544.9H498.2V543.5H499.2V546.3H502.3V544.9H503.3V547.7H515.7V546.3H517.7V544.9H519.8V543.5H521.8V542.1H522.9V540.8H524.9V539.4H526V538H527V536.6H528V535.2H529V533.8H530.1V532.5H531.1V531.1H532.1V529.7H533.2V528.3H534.2V526.9H535.2V525.5H536.2V524.2H537.3V522.8H539.3V518.6H540.4V517.2H541.4V515.9H542.4V513.1H543.4V511.7H544.5V510.3H545.5V507.6H546.5V506.2H547.6V503.4H548.6V502H549.6V499.3H550.6V497.9H551.7V496.5H552.7V493.7H553.7V491H554.7V489.6H555.8V486.8H556.8V484.1H557.8V482.7H558.9V481.3H559.9V478.5H560.9V475.8H561.6V474.4H561.6V330.5H561.9V334.7H563V331.9H564V327.8H565V327.8H566.1V326.4H567.1V323.6H568.1V320.9H569.1V319.5H570.2V320.9H571.2V315.3H572.2V313.9H573.3V308.4H574.3V309.8H575.3V307H576.3V305.6H577.4V304.3H578.4V301.5H579.4V300.1H581.5V297.3H582.5V294.6H583.5V291.8H584.6V291.8H585.6V290.4H586.6V287.7H587.7V287.7H588.7V286.3H589.7V284.9H590.7V283.5H592.8V280.7H593.8V279.4H595.9V278H596.9V276.6H599V275.2H601V271.1H602.1V273.8H603.1V272.5H605.1V269.7H607.2V271.1H616.5V272.5H617.5V273.8H618.5V272.5H620.6V276.6H621.6V273.8H622.6V275.2H624.7V276.6H625.7V278H626.7V276.6H627.8V279.4H628.8V282.1H630.9V283.5H631.9V284.9H632.9V286.3H635V289H636V290.4H637V291.8H638.1V293.2H639.1V294.6H640.1V296H641.1V297.3H642.2V300.1H643.2V302.9H645.3V305.6H646.3V307H647.3V309.8H648.3V311.2H649.4V312.6H650.4V315.3H651.4V316.7H652.5V319.5H653.5V320.9H654.5V323.6H655.5V325H656.6V327.8H657.6V329.2H658.6V331.9H659.7V330.5H660.7V336.1H661.7V337.5H662.7V340.2H663.8V341.6H664.6V344.4H664.6V488.2H664.8V484.1H665.8V486.8H667.9V488.2H668.9V491H669.9V495.1H671V496.5H672V496.5H673V499.3H674.1V503.4H675.1V504.8H676.1V507.6H677.1V508.9H678.2V510.3H679.2V513.1H680.2V514.5H681.3V517.2H682.3V518.6H683.3V520H684.3V521.4H685.4V524.2H686.4V525.5H687.4V526.9H688.5V528.3H689.5V529.7H690.5V532.5H691.5V533.8H692.6V533.8H693.6V535.2H694.6V538H695.7V538H696.7V539.4H698.7V542.1H699.8V542.1H700.8V543.5H702.9V544.9H705.9V546.3H708V547.7H709V546.3H710.1V547.7H716.2V549.1H717.3V547.7H718.3V546.3H719.3V547.7H720.3V546.3H721.4V547.7H722.4V546.3H723.4V544.9H725.5V543.5H727.5V542.1H729.6V540.8H730.6V539.4H731.7V538H733.7V536.6H734.7V535.2H736.8V532.5H737.8V531.1H738.9V529.7H739.9V528.3H741.9V524.2H743V522.8H744V521.4H745V520H746.1V518.6H747.1V514.5H749.1V511.7H750.2V510.3H751.2V508.9H752.2V506.2H753.3V504.8H754.3V502H755.3V499.3H756.3V497.9H757.4V496.5H758.4V493.7H759.4V492.3H760.4V489.6H761.5V491H762.5V485.4H763.5V484.1H764.6V481.3H765.6V479.9H766.6V477.1H767.6V474.4H767.7V330.5H768.7V336.1H769.7V330.5H770.7V329.2H771.8V326.4H772.8V325H773.8V322.2H774.8V320.9H775.9V318.1H776.9V316.7H777.9V313.9H779V312.6H780V309.8H781V308.4H782V305.6H783.1V304.3H784.1V302.9H785.1V301.5H786.2V298.7H787.2V297.3H788.2V296H789.2V294.6H790.3V290.4H792.3V289H793.4V287.7H794.4V286.3H795.4V284.9H796.4V282.1H799.5V283.5H800.6V279.4H801.6V278H803.6V276.6H804.7V273.8H805.7V275.2H806.7V272.5H807.8V273.8H808.8V272.5H811.9V271.1H823.2V272.5H824.2V275.2H825.2V272.5H826.3V273.8H828.3V278H829.4V275.2H830.4V279.4H831.4V276.6H832.4V278H833.5V279.4H834.5V280.7H836.6V284.9H837.6V283.5H838.6V286.3H840.7V287.7H841.7V289H842.7V290.4H843.8V291.8H844.8V293.2H845.8V296H846.8V297.3H847.9V298.7H848.9V301.5H849.9V302.9H851V304.3H852V305.6H853V308.4H854V309.8H855.1V312.6H856.1V313.9H857.1V313.9H858.2V318.1H859.2V320.9H860.2V322.2H861.2V320.9H862.3V326.4H863.3V329.2H864.3V330.5H865.4V333.3H866.4V334.7H867.4V337.5H868.4V338.8H869.5V341.6H870.5V343H870.7V344.4H870.7V488.2H871.5V485.4H872.6V488.2H873.6V489.6H874.6V492.3H875.6V491H876.7V496.5H877.7V497.9H878.7V500.6H879.8V502H880.8V504.8H881.8V506.2H882.8V508.9H883.9V510.3H884.9V511.7H885.9V514.5H887V515.9H888V517.2H889V520H890V524.2H891.1V522.8H892.1V524.2H893.1V526.9H894.2V528.3H895.2V529.7H896.2V531.1H897.2V532.5H898.3V535.2H900.3V536.6H902.4V538H903.4V539.4H904.4V540.8H905.5V543.5H908.6V542.1H909.6V544.9H911.6V547.7H912.7V546.3H913.7V543.5H914.7V547.7H915.8V549.1H916.8V547.7H917.8V546.3H918.8V547.7H927.1V546.3H929.1V543.5H930.2V544.9H932.2V543.5H933.2V542.1H935.3V540.8H936.3V539.4H938.4V538H939.4V536.6H940.4V535.2H941.5V536.6H942.5V532.5H943.5V531.1H944.6V529.7H945.6V528.3H946.6V526.9H947.6V525.5H948.7V524.2H949.7V521.4H950.7V520H951.8V518.6H952.8V517.2H953.8V514.5H954.8V513.1H955.9V511.7H956.9V508.9H957.9V507.6H959V504.8H960V503.4H961V500.6H962V499.3H963.1V493.7H964.1V495.1H965.1V492.3H966.1V491H967.2V488.2H968.2V486.8H969.2V484.1H970.3V482.7H971.3V481.3H972.3V478.5H973.3V473H973.8V474.4H973.8V330.5H974.4V333.3H975.4V331.9H976.4V329.2H977.5V327.8H978.5V325H979.5V323.6H980.5V320.9H981.6V319.5H982.6V316.7H983.6V315.3H984.7V312.6H985.7V311.2H986.7V308.4H987.7V307H988.8V305.6H989.8V302.9H990.8V301.5H991.9V300.1H992.9V297.3H993.9V296H994.9V294.6H996V293.2H997V291.8H998V290.4H999.1V289H1000.1V289H1001.1V286.3H1002.1V284.9H1003.2V283.5H1004.2V282.1H1005.2V278H1006.3V279.4H1007.3V278H1009.3V276.6H1010.4V275.2H1012.4V273.8H1014.5V272.5H1017.6V271.1H1022.7V269.7H1023.7V271.1H1025.8V272.5H1026.8V269.7H1027.9V271.1H1028.9V272.5H1032V273.8H1034V275.2H1036.1V276.6H1037.1V275.2H1038.1V278H1039.2V279.4H1041.2V280.7H1042.3V282.1H1043.3V283.5H1044.3V286.3H1046.4V287.7H1047.4V289H1048.4V290.4H1049.5V291.8H1050.5V293.2H1051.5V296H1053.6V298.7H1054.6V300.1H1055.6V301.5H1056.7V305.6H1057.7V302.9H1058.7V307H1059.7V312.6H1060.8V312.6H1061.8V313.9H1062.8V315.3H1063.9V316.7H1064.9V319.5H1064.9" stroke="#ff0000" stroke-width="1.25"/>
<path d="M33.3,218.2H35.4V223.7H37.4V226.5H39.5V232H41.5V237.5H43.6V240.3H45.6V245.8H47.7V248.6H49.8V254.1H51.8V256.9H53.9V262.4H55.9V265.2H58V270.7H60V273.5H62.1V279H64.2V281.8H66.2V284.5H68.3V287.3H70.3V292.8H72.4V295.6H74.4V298.4H76.5V301.1H80.6V303.9H82.7V306.7H86.8V309.4H93V312.2H101.2V309.4H107.4V306.7H111.5V303.9H113.5V301.1H115.6V298.4H117.6V295.6H119.7V292.8H121.8V290.1H123.8V287.3H125.9V284.5H127.9V281.8H130V276.2H132V273.5H134.1V267.9H136.1V265.2H138.2V262.4H140.3V256.9H142.3V251.3H144.4V248.6H146.4V243.1H148.5V240.3H150.5V234.8H152.6V232H154.7V226.5H156.7V223.7H158.8V218.2H160.8V215.4H162.9V209.9H164.9V207.1H167V201.6H169.1V198.8H171.1V196H173.2V193.3H175.2V190.5H177.3V187.7H179.3V185H181.4V182.2H183.5V179.4H187.6V176.7H191.7V173.9H208.1V176.7H212.3V179.4H216.4V182.2H218.4V185H220.5V187.7H222.5V190.5H224.6V193.3H226.7V196H228.7V198.8H230.8V204.3H232.8V207.1H234.9V209.9H236.9V215.4H239V218.2H241.1V223.7H243.1V226.5H245.2V232H247.2V234.8H249.3V240.3H251.3V243.1H253.4V248.6H255.5V254.1H257.5V256.9H259.6V262.4H261.6V265.2H263.7V270.7H265.7V273.5H267.8V276.2H269.9V281.8H271.9V284.5H274V287.3H276V290.1H278.1V292.8H280.1V295.6H282.2V298.4H284.3V301.1H286.3V303.9H288.4V306.7H292.5V309.4H298.7V312.2H306.9V309.4H313.1V306.7H317.2V303.9H319.2V301.1H321.3V298.4H325.4V295.6H327.5V290.1H329.5V287.3H331.6V284.5H333.6V281.8H335.7V279H337.7V273.5H339.8V270.7H341.9V265.2H343.9V262.4H346V256.9H348V254.1H350.1V248.6H352.1V245.8H354.2V240.3H356.2V234.8H358.3V232H360.4V226.5H362.4V223.7H364.5V218.2H366.5V215.4H368.6V209.9H370.6V207.1H372.7V204.3H374.8V198.8H376.8V196H378.9V193.3H380.9V190.5H383V187.7H385V185H387.1V182.2H389.2V179.4H393.3V176.7H397.4V173.9H415.9V176.7H418V179.4H422.1V182.2H424.1V185H426.2V187.7H428.2V190.5H430.3V193.3H432.4V196H434.4V198.8H436.5V201.6H438.5V207.1H440.6V209.9H442.6V212.6H444.7V218.2H446.8V220.9H448.8V226.5H450.9V229.2H452.9V234.8H455V240.3H457V243.1H459.1V248.6H461.2V251.3H463.2V256.9H465.3V259.6H467.3V265.2H469.4V267.9H471.4V273.5H473.5V276.2H475.6V279H477.6V284.5H479.7V287.3H481.7V290.1H483.8V292.8H485.8V295.6H487.9V298.4H490V301.1H492V303.9H494.1V306.7H498.2V309.4H504.4V312.2H512.6V309.4H518.8V306.7H522.9V303.9H524.9V301.1H529V298.4H531.1V295.6H533.2V292.8H535.2V290.1H537.3V284.5H539.3V281.8H541.4V279H543.4V273.5H545.5V270.7H547.5V267.9H549.6V262.4H551.7V259.6H553.7V254.1H555.8V248.6H557.8V245.8H559.9V240.3H561.9V237.5H564V232H566.1V229.2H568.1V223.7H570.2V220.9H572.2V215.4H574.3V212.6H576.3V207.1H578.4V204.3H580.5V201.6H582.5V196H584.6V193.3H586.6V190.5H588.7V187.7H590.7V185H592.8V182.2H596.9V179.4H599V176.7H603.1V173.9H621.6V176.7H625.7V179.4H627.8V182.2H629.8V185H633.9V187.7H636V193.3H638.1V196H640.1V198.8H642.2V201.6H644.2V204.3H646.3V209.9H648.3V212.6H650.4V218.2H652.5V220.9H654.5V226.5H656.6V229.2H658.6V234.8H660.7V237.5H662.7V243.1H664.8V245.8H666.9V251.3H668.9V256.9H671V259.6H673V265.2H675.1V267.9H677.1V270.7H679.2V276.2H681.3V279H683.3V284.5H685.4V287.3H687.4V290.1H689.5V292.8H691.5V295.6H693.6V298.4H695.7V301.1H697.7V303.9H701.8V306.7H703.9V309.4H710.1V312.2H720.3V309.4H724.5V306.7H728.6V303.9H732.7V301.1H734.7V298.4H736.8V295.6H738.9V292.8H740.9V290.1H743V287.3H745V281.8H747.1V279H749.1V276.2H751.2V270.7H753.2V267.9H755.3V262.4H757.4V259.6H759.4V254.1H761.5V251.3H763.5V245.8H765.6V243.1H767.6V237.5H769.7V232H771.8V229.2H773.8V223.7H775.9V220.9H777.9V215.4H780V212.6H782V209.9H784.1V204.3H786.2V201.6H788.2V198.8H790.3V193.3H792.3V190.5H794.4V187.7H796.4V185H798.5V182.2H802.6V179.4H804.7V176.7H808.8V173.9H827.3V176.7H831.4V179.4H833.5V182.2H837.6V185H839.6V187.7H841.7V190.5H843.8V193.3H845.8V198.8H847.9V201.6H849.9V204.3H852V207.1H854V212.6H856.1V215.4H858.2V220.9H860.2V223.7H862.3V229.2H864.3V232H866.4V237.5H868.4V243.1H870.5V245.8H872.6V251.3H874.6V254.1H876.7V259.6H878.7V262.4H880.8V267.9H882.8V270.7H884.9V276.2H887V279H889V281.8H891.1V287.3H893.1V290.1H895.2V292.8H897.2V295.6H899.3V298.4H901.4V301.1H903.4V303.9H907.5V306.7H911.6V309.4H915.8V312.2H926V309.4H932.2V306.7H934.3V303.9H938.4V301.1H940.4V298.4H942.5V295.6H944.6V292.8H946.6V290.1H948.7V287.3H950.7V284.5H952.8V279H954.8V276.2H956.9V273.5H958.9V267.9H961V265.2H963.1V259.6H965.1V256.9H967.2V251.3H969.2V245.8H971.3V243.1H973.3V237.5H975.4V234.8H977.5V229.2H979.5V226.5H981.6V220.9H983.6V218.2H985.7V212.6H987.7V209.9H989.8V204.3H991.9V201.6H993.9V198.8H996V196H998V193.3H1000.1V187.7H1004.2V185H1006.3V182.2H1008.3V179.4H1010.4V176.7H1014.5V173.9H1033V176.7H1037.1V179.4H1041.2V182.2H1043.3V185H1045.3V187.7H1047.4V190.5H1049.5V193.3H1051.5V196H1053.6V201.6H1055.6V204.3H1057.7V207.1H1059.7V212.6H1061.8V215.4H1063.9V220.9H1065.9V223.7H1065.9" stroke="#f6ee00"/>
<path d="M33.3,519.6L34.7,519.6L35.4,517.6L36.1,519.6L37.4,519.6L38.8,519.6L39.5,517.6L40.2,519.6L41.5,519.6L43.6,519.6L44.9,519.6L45.6,517.6L46.3,519.6L46.4,519.6L46.4,667.5L47.3,667.5L47.3,661L49.8,661L51.8,661L53.9,661L55.9,661L58,661L60,661L62.1,661L64.2,661L66.2,661L68.3,661L70.3,661L72.4,661L74.4,661L76.5,661L78.6,661L80.6,661L82.7,661L84.7,661L86.8,661L88.8,661L90.9,661L93,661L95,661L97.1,661L99.1,661L101.2,661L103.2,661L105.3,661L107.4,661L109.4,661L111.5,661L113.5,661L115.6,661L117.6,661L119.7,661L121.8,661L123.8,661L125.9,661L127.9,661L130,661L132,661L134.1,661L136.1,661L138.2,661L140.3,661L142.3,661L144.4,661L146.4,661L148.5,661L149.5,661L149.5,514.8L150.4,514.8L150.4,519.6L151.9,519.6L152.6,517.6L153.3,519.6L154.7,519.6L156.7,519.6L158.8,519.6L160.8,519.6L162.9,519.6L164.9,519.6L167,519.6L169.1,519.6L171.1,519.6L173.2,519.6L175.2,519.6L177.3,519.6L179.3,519.6L180.7,519.6L181.4,517.6L182.1,519.6L183.5,519.6L185.5,519.6L187.6,519.6L189.6,519.6L191,519.6L191.7,517.6L192.4,519.6L193.7,519.6L195.8,519.6L197.2,519.6L197.9,517.6L198.6,519.6L199.9,519.6L201.3,519.6L202,517.6L202.7,519.6L203.3,519.6L204,517.6L204.7,519.6L205.4,519.6L206.1,517.6L206.8,519.6L208.1,519.6L209.5,519.6L210.2,517.6L210.9,519.6L211.6,519.6L212.3,517.6L213,519.6L214.3,519.6L216.4,519.6L217.7,519.6L218.4,517.6L219.1,519.6L220.5,519.6L222.5,519.6L224.6,519.6L226.7,519.6L228.7,519.6L230.1,519.6L230.8,517.6L231.5,519.6L232.8,519.6L234.9,519.6L236.9,519.6L239,519.6L240.4,519.6L241.1,517.6L241.8,519.6L242.4,519.6L243.1,517.6L243.8,519.6L244.5,519.6L245.2,517.6L245.9,519.6L246.5,519.6L247.2,517.6L247.9,519.6L249.3,519.6L251.3,519.6L252.5,519.6L252.5,667.5L253.4,667.5L253.4,661L255.5,661L257,661L257.5,665.2L258,661L259.6,661L261.6,661L263.7,661L265.7,661L267.8,661L269.9,661L271.9,661L274,661L276,661L278.1,661L280.1,661L282.2,661L284.3,661L286.3,661L288.4,661L290.4,661L292.5,661L294.5,661L296.6,661L298.7,661L300.7,661L302.8,661L304.8,661L306.4,661L306.9,665.2L307.4,661L308.9,661L311,661L313.1,661L315.1,661L317.2,661L319.2,661L321.3,661L323.3,661L325.4,661L327.5,661L329.5,661L331.6,661L333.6,661L335.7,661L337.7,661L339.8,661L341.9,661L343.9,661L346,661L348,661L350.1,661L352.1,661L354.2,661L355.6,661L355.6,514.8L356.5,514.8L356.5,519.6L358.3,519.6L359.7,519.6L360.4,517.6L361.1,519.6L362.4,519.6L363.8,519.6L364.5,517.6L365.2,519.6L366.5,519.6L368.6,519.6L370.6,519.6L372.7,519.6L374.1,519.6L374.8,517.6L375.5,519.6L376.8,519.6L378.2,519.6L378.9,517.6L379.6,519.6L380.9,519.6L383,519.6L385,519.6L387.1,519.6L388.5,519.6L389.2,517.6L389.9,519.6L391.2,519.6L393.3,519.6L395.3,519.6L397.4,519.6L399.4,519.6L401.5,519.6L402.9,519.6L403.6,517.6L404.3,519.6L405.6,519.6L407.7,519.6L409,519.6L409.7,517.6L410.4,519.6L411.1,519.6L411.8,517.6L412.5,519.6L413.1,519.6L413.8,517.6L414.5,519.6L415.2,519.6L415.9,517.6L416.6,519.6L418,519.6L420,519.6L422.1,519.6L424.1,519.6L426.2,519.6L428.2,519.6L430.3,519.6L431.7,519.6L432.4,517.6L433.1,519.6L433.7,519.6L434.4,517.6L435.1,519.6L435.8,519.6L436.5,517.6L437.2,519.6L437.8,519.6L438.5,517.6L439.2,519.6L440.6,519.6L442.6,519.6L444.7,519.6L446.8,519.6L448.8,519.6L450.9,519.6L452.2,519.6L452.9,517.6L453.6,519.6L455,519.6L457,519.6L458.5,519.6L458.5,667.5L459.4,667.5L459.4,661L461.2,661L463.2,661L465.3,661L467.3,661L469.4,661L471.4,661L473.5,661L475.6,661L477.6,661L479.7,661L481.7,661L483.8,661L485.8,661L487.9,661L490,661L492,661L494.1,661L496.1,661L498.2,661L500.2,661L502.3,661L504.4,661L506.4,661L508.5,661L510,661L510.5,665.2L511,661L512.6,661L514.6,661L516.7,661L518.8,661L520.8,661L522.9,661L524.9,661L527,661L529,661L531.1,661L533.2,661L535.2,661L537.3,661L539.3,661L541.4,661L543.4,661L545.5,661L547.5,661L549.6,661L551.7,661L553.7,661L555.8,661L557.8,661L559.9,661L561.6,661L561.6,514.8L562.5,514.8L562.5,519.6L564,519.6L565.4,519.6L566.1,517.6L566.8,519.6L568.1,519.6L569.5,519.6L570.2,517.6L570.9,519.6L571.5,519.6L572.2,517.6L572.9,519.6L574.3,519.6L575.6,519.6L576.3,517.6L577,519.6L578.4,519.6L580.5,519.6L582.5,519.6L584.6,519.6L586.6,519.6L588.7,519.6L590.7,519.6L592.1,519.6L592.8,517.6L593.5,519.6L594.9,519.6L596.2,519.6L596.9,517.6L597.6,519.6L598.3,519.6L599,517.6L599.7,519.6L601,519.6L603.1,519.6L605.1,519.6L607.2,519.6L609.3,519.6L611.3,519.6L613.4,519.6L615.4,519.6L617.5,519.6L619.5,519.6L621.6,519.6L623.7,519.6L625.7,519.6L627.8,519.6L629.8,519.6L631.9,519.6L633.9,519.6L635.3,519.6L636,517.6L636.7,519.6L638.1,519.6L640.1,519.6L642.2,519.6L643.5,519.6L644.2,517.6L644.9,519.6L645.6,519.6L646.3,517.6L647,519.6L648.3,519.6L649.7,519.6L650.4,517.6L651.1,519.6L651.8,519.6L652.5,517.6L653.2,519.6L653.8,519.6L654.5,517.6L655.2,519.6L656.6,519.6L658.6,519.6L660.7,519.6L662,519.6L662.7,517.6L663.4,519.6L664.6,519.6L664.6,667.5L665.5,667.5L665.5,661L666.9,661L668.9,661L671,661L673,661L675.1,661L677.1,661L679.2,661L681.3,661L683.3,661L685.4,661L687.4,661L689.5,661L691.5,661L693.6,661L695.7,661L697.7,661L699.8,661L701.8,661L703.9,661L705.9,661L708,661L710.1,661L712.1,661L714.2,661L716.2,661L718.3,661L720.3,661L722.4,661L724.5,661L726.5,661L728.6,661L730.6,661L732.7,661L734.7,661L736.8,661L738.9,661L740.9,661L743,661L745,661L747.1,661L749.1,661L751.2,661L753.2,661L755.3,661L757.4,661L759.4,661L761.5,661L763.5,661L765.6,661L767.6,661L767.7,661L767.7,514.8L768.6,514.8L768.6,519.6L771.8,519.6L773.1,519.6L773.8,517.6L774.5,519.6L775.9,519.6L777.2,519.6L777.9,517.6L778.6,519.6L780,519.6L782,519.6L784.1,519.6L786.2,519.6L788.2,519.6L789.6,519.6L790.3,517.6L791,519.6L791.6,519.6L792.3,517.6L793,519.6L794.4,519.6L795.7,519.6L796.4,517.6L797.1,519.6L797.8,519.6L798.5,517.6L799.2,519.6L799.9,519.6L800.6,517.6L801.3,519.6L801.9,519.6L802.6,517.6L803.3,519.6L804,519.6L804.7,517.6L805.4,519.6L806.7,519.6L808.8,519.6L810.8,519.6L812.2,519.6L812.9,517.6L813.6,519.6L815,519.6L816.3,519.6L817,517.6L817.7,519.6L819.1,519.6L820.4,519.6L821.1,517.6L821.8,519.6L822.5,519.6L823.2,517.6L823.9,519.6L824.5,519.6L825.2,517.6L825.9,519.6L827.3,519.6L829.4,519.6L830.7,519.6L831.4,517.6L832.1,519.6L833.5,519.6L835.5,519.6L836.9,519.6L837.6,517.6L838.3,519.6L839.6,519.6L841.7,519.6L843.8,519.6L845.8,519.6L847.9,519.6L849.9,519.6L852,519.6L854,519.6L856.1,519.6L858.2,519.6L860.2,519.6L862.3,519.6L864.3,519.6L866.4,519.6L867.7,519.6L868.4,517.6L869.1,519.6L869.8,519.6L870.5,517.6L871.2,519.6L870.7,519.6L870.7,667.5L871.6,667.5L871.6,661L874.6,661L876.7,661L878.7,661L880.8,661L882.8,661L884.9,661L887,661L889,661L891.1,661L893.1,661L895.2,661L897.2,661L899.3,661L901.4,661L903.4,661L905.5,661L907.5,661L909.6,661L911.6,661L913.7,661L915.8,661L917.8,661L919.4,661L919.9,665.2L920.4,661L921.9,661L924,661L926,661L928.1,661L930.2,661L931.7,661L932.2,665.2L932.7,661L934.3,661L936.3,661L938.4,661L940.4,661L942.5,661L944.6,661L946.6,661L948.7,661L950.7,661L952.8,661L954.8,661L956.9,661L958.9,661L961,661L963.1,661L965.1,661L967.2,661L969.2,661L971.3,661L973.3,661L973.8,661L973.8,514.8L974.7,514.8L974.7,519.6L977.5,519.6L979.5,519.6L981.6,519.6L983.6,519.6L985.7,519.6L987,519.6L987.7,517.6L988.4,519.6L989.8,519.6L991.9,519.6L993.9,519.6L996,519.6L998,519.6L1000.1,519.6L1002.1,519.6L1004.2,519.6L1006.3,519.6L1007.6,519.6L1008.3,517.6L1009,519.6L1009.7,519.6L1010.4,517.6L1011.1,519.6L1011.7,519.6L1012.4,517.6L1013.1,519.6L1014.5,519.6L1015.8,519.6L1016.5,517.6L1017.2,519.6L1018.6,519.6L1020.7,519.6L1022.7,519.6L1024.8,519.6L1026.8,519.6L1028.9,519.6L1030.2,519.6L1030.9,517.6L1031.6,519.6L1033,519.6L1035.1,519.6L1037.1,519.6L1039.2,519.6L1041.2,519.6L1042.6,519.6L1043.3,517.6L1044,519.6L1045.3,519.6L1046.7,519.6L1047.4,517.6L1048.1,519.6L1048.8,519.6L1049.5,517.6L1050.2,519.6L1050.8,519.6L1051.5,517.6L1052.2,519.6L1053.6,519.6L1054.9,519.6L1055.6,517.6L1056.3,519.6L1057.7,519.6L1059.7,519.6L1061.8,519.6L1063.9,519.6L1065.9,519.6" stroke="#00e6e6" stroke-linejoin="bevel"/>
</g>
<path d="M14,230.6 H26.400 L32,236.4 L26.400,242.2 H14Z" fill="#ffff00"/>
<text x="21.200" y="239.8" font-size="9.500" fill="#333" text-anchor="middle" font-weight="bold">1</text>
<path d="M14,396.9 H26.400 L32,402.7 L26.400,408.5 H14Z" fill="#ff0000"/>
<text x="21.200" y="406.1" font-size="9.500" fill="#6a0000" text-anchor="middle" font-weight="bold">M</text>
<path d="M14,584.5 H26.400 L32,590.3 L26.400,596.1 H14Z" fill="#00e8f0"/>
<text x="21.200" y="593.7" font-size="9.500" fill="#033" text-anchor="middle" font-weight="bold">2</text>
<path d="M1083.500,253.900 H1071.800 L1066,260 L1071.800,266.100 H1083.500Z" fill="#ffff00"/>
<text x="1077.500" y="263.900" font-size="11" fill="#000" text-anchor="middle">T</text>
<text x="54" y="694.5" font-size="12.300" fill="#ff0000">MATH Scale:&#160; 500mV</text>
<rect x="33.8" y="714" width="94.2" height="19" fill="#000"/>
<text x="36.200" y="728.3" font-size="12.5" fill="#ffff00">CH1</text>
<path d="M64.5,724.3c1.3,-4.2 3.2,-4.2 4.5,0s3.200,4.200 4.500,0" fill="none" stroke="#ffff00" stroke-width="1.1"/>
<text x="80" y="728.3" font-size="12.5" fill="#ffff00">500mV</text>
<rect x="146" y="714" width="94.2" height="19" fill="#000"/>
<rect x="147.2" y="715.3" width="27.6" height="16.2" fill="#00e8f0"/>
<text x="148.5" y="728.3" font-size="12.5" fill="#000">CH2</text>
<path d="M176.500,724.3c1.3,-4.2 3.2,-4.2 4.5,0s3.200,4.200 4.500,0" fill="none" stroke="#00e8f0" stroke-width="1.1"/>
<text x="192" y="728.3" font-size="12.5" fill="#00e8f0">500mV</text>
<rect x="970.5" y="713.5" width="92.5" height="19.5" fill="#000"/>
<text x="972.600" y="728" font-size="12.5" fill="#ff8000">Time: 500.0us</text>
</svg></div>
  <div id="panel"><div class="abs" style="left:0px;top:0.4px;width:44.4px;height:25.8px;background:#fff;border-right:1px solid #8c8c8c;border-top:1px solid #fff"></div>
<div class="abs" style="left:44.4px;top:2.4px;width:38.4px;height:23px;border:1px solid #8c8c8c;border-bottom:none;background:linear-gradient(180deg,#f4f4f4 0%,#ebebeb 50%,#dcdcdc 52%,#d4d4d4 100%)"></div>
<div class="abs" style="left:44.4px;top:24.8px;width:160.6px;height:1px;background:#9a9a9a"></div>
<div class="abs pt" style="left:6.6px;top:7.16px;letter-spacing:-.5px">DSO</div>
<div class="abs pt" style="left:48.6px;top:9.06px;letter-spacing:-.5px">DDS</div>
<div class="abs" style="left:5.8px;top:33.2px;width:184px;height:91.6px;border:1px solid #d5dfe5;border-radius:3px;box-shadow:inset 0 0 0 1px #fff,0 0 0 0 #fff;"></div>
<div class="abs pt" style="left:72.3px;top:26.96px;width:51.9px;text-align:center;background:#f0f0f0">Horizontal</div>
<div class="abs pt" style="left:17.3px;top:37.96px;">Time/Div</div>
<div class="abs" style="left:11px;top:51px;width:83px;height:22px;border:1px solid #707070;border-radius:3px;background:linear-gradient(180deg,#f4f4f4 0%,#ececec 45%,#dedede 55%,#d0d0d0 100%);box-shadow:inset 0 0 0 1px rgba(255,255,255,.8)"></div>
<div class="abs pt" style="left:15.6px;top:55.76px;">1.00 us</div>
<svg class="abs" style="left:81.8px;top:60.4px" width="8" height="5" viewBox="0 0 8 5"><path d="M0.3,0.3H7.7L4,4.6Z" fill="#000"/></svg>
<div class="abs pt" style="left:17.3px;top:81.16px;">Delay Time</div>
<div class="abs" style="left:11.2px;top:98.5px;width:82.3px;height:22px;background:#fff;border:1px solid #dfe5ea;border-top-color:#abadb3"></div>
<div class="abs pt" style="left:11.2px;top:102.26px;width:66px;text-align:center">0.00ns</div>
<div class="abs" style="left:77.2px;top:100.2px;width:14.4px;height:8.6px;border:1px solid #a0a8b8;background:#f2f2f2"></div>
<svg class="abs" style="left:81px;top:102.4px" width="7" height="5" viewBox="0 0 7 4.5"><path d="M0.5,4L3.5,0.5L6.5,4Z" fill="#4a62c4"/></svg>
<div class="abs" style="left:77.2px;top:110.4px;width:14.4px;height:8.6px;border:1px solid #a0a8b8;background:#f2f2f2"></div>
<svg class="abs" style="left:81px;top:112.6px" width="7" height="5" viewBox="0 0 7 4.5"><path d="M0.5,0.5L3.5,4L6.5,0.5Z" fill="#4a62c4"/></svg>
<div class="abs" style="left:6.4px;top:140.8px;width:182.2px;height:125.7px;border:1px solid #d5dfe5;border-radius:3px;box-shadow:inset 0 0 0 1px #fff,0 0 0 0 #fff;"></div>
<div class="abs pt" style="left:78.4px;top:134.06px;width:40.1px;text-align:center;background:#f0f0f0">Vertical</div>
<div class="abs" style="left:11px;top:149px;width:83px;height:22px;border:1px solid #707070;border-radius:3px;background:linear-gradient(180deg,#f4f4f4 0%,#ececec 45%,#dedede 55%,#d0d0d0 100%);box-shadow:inset 0 0 0 1px rgba(255,255,255,.8)"></div>
<div class="abs pt" style="left:15.7px;top:154.06px;">CH1</div>
<svg class="abs" style="left:81.8px;top:158.4px" width="8" height="5" viewBox="0 0 8 5"><path d="M0.3,0.3H7.7L4,4.6Z" fill="#000"/></svg>
<div class="abs" style="left:11px;top:175px;width:83px;height:22px;border:1px solid #707070;border-radius:3px;background:linear-gradient(180deg,#f4f4f4 0%,#ececec 45%,#dedede 55%,#d0d0d0 100%);box-shadow:inset 0 0 0 1px rgba(255,255,255,.8)"></div>
<div class="abs pt" style="left:15.7px;top:179.66px;">1.00V</div>
<svg class="abs" style="left:81.8px;top:184.4px" width="8" height="5" viewBox="0 0 8 5"><path d="M0.3,0.3H7.7L4,4.6Z" fill="#000"/></svg>
<div class="abs" style="left:11px;top:203px;width:83px;height:22px;border:1px solid #707070;border-radius:3px;background:linear-gradient(180deg,#f4f4f4 0%,#ececec 45%,#dedede 55%,#d0d0d0 100%);box-shadow:inset 0 0 0 1px rgba(255,255,255,.8)"></div>
<div class="abs pt" style="left:15.7px;top:207.86px;">DC</div>
<svg class="abs" style="left:81.8px;top:212.4px" width="8" height="5" viewBox="0 0 8 5"><path d="M0.3,0.3H7.7L4,4.6Z" fill="#000"/></svg>
<div class="abs" style="left:11px;top:233px;width:83px;height:22px;border:1px solid #707070;border-radius:3px;background:linear-gradient(180deg,#f4f4f4 0%,#ececec 45%,#dedede 55%,#d0d0d0 100%);box-shadow:inset 0 0 0 1px rgba(255,255,255,.8)"></div>
<div class="abs pt" style="left:15.7px;top:237.66px;">X1</div>
<svg class="abs" style="left:81.8px;top:242.4px" width="8" height="5" viewBox="0 0 8 5"><path d="M0.3,0.3H7.7L4,4.6Z" fill="#000"/></svg>
<div class="abs" style="left:113.1px;top:154.3px;width:12.6px;height:12.4px;border:1px solid #8e8f8f;background:linear-gradient(135deg,#dfe3e8,#fff);box-shadow:inset 0 0 0 1px #f4f4f4"></div>
<svg class="abs" style="left:114.6px;top:155.6px" width="10" height="10" viewBox="0 0 10 10"><path d="M1.5,4.600L3.800,8L8.300,1.200" fill="none" stroke="#3c4f94" stroke-width="1.700"/></svg>
<div class="abs pt" style="left:132.7px;top:154.96px;letter-spacing:-.45px">ON/OFF</div>
<svg class="abs" style="left:101.1px;top:40.1px" width="84" height="84" viewBox="1186.1 135.1 84 84"><defs><linearGradient id="kr177" x1="0" y1="0" x2="1" y2="1"><stop offset="0" stop-color="#8a8a8a"/><stop offset=".5" stop-color="#a8a8a8"/><stop offset="1" stop-color="#8c8c8c"/></linearGradient></defs><circle cx="1228.1" cy="177.1" r="36.500" fill="#fff"/><path d="M1201.5,203.7A37.6,37.6 0 1 1 1254.7,203.7" fill="none" stroke="#222" stroke-width="1"/><path d="M1201.5,203.7L1228.1,177.1L1254.7,203.7L1260.7,215.7L1195.5,215.7Z" fill="#f0f0f0"/><path d="M1202.9,202.3l-6.3,6.3M1253.3,202.3l6.300,6.300" stroke="#111" stroke-width="1.300"/><circle cx="1228.1" cy="177.1" r="34.700" fill="url(#kr177)"/><circle cx="1228.1" cy="177.1" r="29" fill="#00008c"/><circle cx="1228.1" cy="177.1" r="27" fill="#0000d2"/><path d="M1235.2,175.3L1251.3,170.5" stroke="#d6cf5a" stroke-width="1.800"/></svg>
<svg class="abs" style="left:101.2px;top:174.7px" width="84" height="84" viewBox="1186.2 269.7 84 84"><defs><linearGradient id="kr311" x1="0" y1="0" x2="1" y2="1"><stop offset="0" stop-color="#8a8a8a"/><stop offset=".5" stop-color="#a8a8a8"/><stop offset="1" stop-color="#8c8c8c"/></linearGradient></defs><circle cx="1228.2" cy="311.7" r="36.500" fill="#fff"/><path d="M1201.6,338.3A37.6,37.6 0 1 1 1254.8,338.3" fill="none" stroke="#222" stroke-width="1"/><path d="M1201.6,338.3L1228.2,311.7L1254.8,338.3L1260.8,350.3L1195.6,350.3Z" fill="#f0f0f0"/><path d="M1203.0,336.9l-6.3,6.3M1253.4,336.9l6.300,6.300" stroke="#111" stroke-width="1.300"/><circle cx="1228.2" cy="311.7" r="34.700" fill="url(#kr311)"/><circle cx="1228.2" cy="311.7" r="29" fill="#a0a000"/><circle cx="1228.2" cy="311.7" r="27" fill="#ffff00"/><path d="M1205.7,302.9L1220.9,309.2" stroke="#2424c8" stroke-width="1.800"/></svg>
<div class="abs" style="left:6.4px;top:284px;width:182.2px;height:79px;border:1px solid #d5dfe5;border-radius:3px;box-shadow:inset 0 0 0 1px #fff,0 0 0 0 #fff;"></div>
<div class="abs pt" style="left:64.5px;top:277.16px;width:67.2px;text-align:center;background:#f0f0f0">Basic Trigger</div>
<div class="abs pt" style="left:17.3px;top:301.76px;">Trigger Mode</div>
<div class="abs" style="left:107px;top:296px;width:74px;height:22px;border:1px solid #707070;border-radius:3px;background:linear-gradient(180deg,#f4f4f4 0%,#ececec 45%,#dedede 55%,#d0d0d0 100%);box-shadow:inset 0 0 0 1px rgba(255,255,255,.8)"></div>
<div class="abs pt" style="left:111.4px;top:301.06px;">Edge</div>
<svg class="abs" style="left:168.8px;top:305.4px" width="8" height="5" viewBox="0 0 8 5"><path d="M0.3,0.3H7.7L4,4.6Z" fill="#000"/></svg>
<div class="abs pt" style="left:17.3px;top:336.66px;">Trigger Sweep</div>
<div class="abs" style="left:107px;top:332px;width:74px;height:22px;border:1px solid #707070;border-radius:3px;background:linear-gradient(180deg,#f4f4f4 0%,#ececec 45%,#dedede 55%,#d0d0d0 100%);box-shadow:inset 0 0 0 1px rgba(255,255,255,.8)"></div>
<div class="abs pt" style="left:111.4px;top:337.16px;">Auto</div>
<svg class="abs" style="left:168.8px;top:341.4px" width="8" height="5" viewBox="0 0 8 5"><path d="M0.3,0.3H7.7L4,4.6Z" fill="#000"/></svg>
<div class="abs" style="left:6.4px;top:373.5px;width:182.2px;height:179.1px;border:1px solid #d5dfe5;border-bottom:none;border-radius:3px 3px 0 0;box-shadow:inset 1px 1px 0 #fff,inset -1px 0 0 #fff;"></div>
<div class="abs pt" style="left:65px;top:367.76px;width:65.3px;text-align:center;background:#f0f0f0">Edge Trigger</div>
<div class="abs pt" style="left:17.3px;top:391.26px;">Trigger Source</div>
<div class="abs" style="left:107px;top:387px;width:74px;height:21px;border:1px solid #707070;border-radius:3px;background:linear-gradient(180deg,#f4f4f4 0%,#ececec 45%,#dedede 55%,#d0d0d0 100%);box-shadow:inset 0 0 0 1px rgba(255,255,255,.8)"></div>
<div class="abs pt" style="left:111.4px;top:391.86px;">CH1</div>
<svg class="abs" style="left:168.8px;top:395.9px" width="8" height="5" viewBox="0 0 8 5"><path d="M0.3,0.3H7.7L4,4.6Z" fill="#000"/></svg>
<div class="abs pt" style="left:17.3px;top:423.26px;">Trigger Slope</div>
<div class="abs" style="left:107px;top:419px;width:74px;height:21px;border:1px solid #707070;border-radius:3px;background:linear-gradient(180deg,#f4f4f4 0%,#ececec 45%,#dedede 55%,#d0d0d0 100%);box-shadow:inset 0 0 0 1px rgba(255,255,255,.8)"></div>
<div class="abs pt" style="left:114px;top:423.36px;">-</div>
<svg class="abs" style="left:168.8px;top:427.9px" width="8" height="5" viewBox="0 0 8 5"><path d="M0.3,0.3H7.7L4,4.6Z" fill="#000"/></svg></div>
  <div id="status"><span style="left:4px">Connected</span><span style="left:160px">Stop</span><span style="left:1152.600px">2016-05-13</span><span style="left:1226.800px">08:26</span><svg class="abs" style="left:1270px;top:10px" width="12" height="12" viewBox="0 0 12 12"><path d="M9,1h2v2h-2zM5,5h2v2h-2zM9,5h2v2h-2zM1,9h2v2h-2zM5,9h2v2h-2zM9,9h2v2h-2z" fill="#b8b8c0"/></svg></div>
 </div>
 <div id="frame"></div>
</div>
</body>
</html>
